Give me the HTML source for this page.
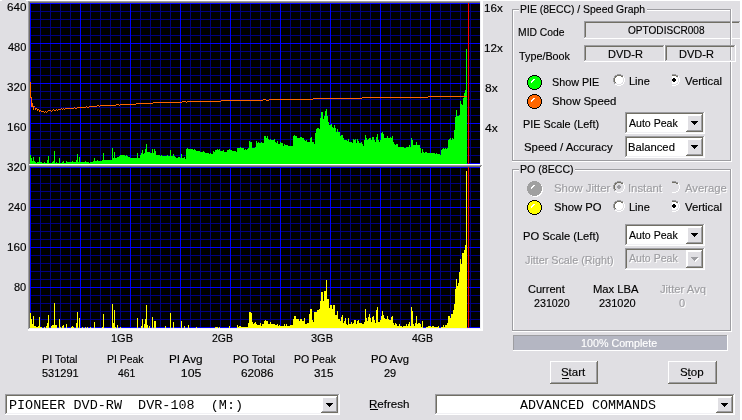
<!DOCTYPE html>
<html><head><meta charset="utf-8"><style>
html,body{margin:0;padding:0;width:742px;height:420px;overflow:hidden;background:#e0dfe3;}
svg{display:block;will-change:transform;}
text{white-space:pre;} .tx{stroke:currentColor;stroke-width:0.15px;}
</style></head><body>
<svg width="742" height="420" viewBox="0 0 742 420" shape-rendering="crispEdges">
<rect x="0" y="0" width="742" height="420" fill="#e0dfe3"/>
<rect x="26" y="0" width="716" height="1" fill="#ffffff"/>
<rect x="0" y="0" width="2" height="1" fill="#ffffff"/>
<rect x="740" y="0" width="2" height="420" fill="#ffffff"/>
<rect x="28" y="1" width="454" height="1" fill="#9d9da1"/>
<rect x="28" y="1" width="1" height="164" fill="#9d9da1"/>
<rect x="29" y="2" width="452" height="1" fill="#716f64"/>
<rect x="29" y="2" width="1" height="163" fill="#716f64"/>
<rect x="30" y="3" width="450" height="161" fill="#000"/>
<rect x="30" y="3" width="1" height="161" fill="#0000ff"/>
<rect x="40" y="3" width="1" height="161" fill="#000080"/>
<rect x="50" y="3" width="1" height="161" fill="#000080"/>
<rect x="60" y="3" width="1" height="161" fill="#000080"/>
<rect x="70" y="3" width="1" height="161" fill="#000080"/>
<rect x="80" y="3" width="1" height="161" fill="#0000ff"/>
<rect x="90" y="3" width="1" height="161" fill="#000080"/>
<rect x="100" y="3" width="1" height="161" fill="#000080"/>
<rect x="110" y="3" width="1" height="161" fill="#000080"/>
<rect x="120" y="3" width="1" height="161" fill="#000080"/>
<rect x="130" y="3" width="1" height="161" fill="#0000ff"/>
<rect x="140" y="3" width="1" height="161" fill="#000080"/>
<rect x="150" y="3" width="1" height="161" fill="#000080"/>
<rect x="160" y="3" width="1" height="161" fill="#000080"/>
<rect x="170" y="3" width="1" height="161" fill="#000080"/>
<rect x="180" y="3" width="1" height="161" fill="#0000ff"/>
<rect x="190" y="3" width="1" height="161" fill="#000080"/>
<rect x="200" y="3" width="1" height="161" fill="#000080"/>
<rect x="210" y="3" width="1" height="161" fill="#000080"/>
<rect x="220" y="3" width="1" height="161" fill="#000080"/>
<rect x="230" y="3" width="1" height="161" fill="#0000ff"/>
<rect x="240" y="3" width="1" height="161" fill="#000080"/>
<rect x="250" y="3" width="1" height="161" fill="#000080"/>
<rect x="260" y="3" width="1" height="161" fill="#000080"/>
<rect x="270" y="3" width="1" height="161" fill="#000080"/>
<rect x="280" y="3" width="1" height="161" fill="#0000ff"/>
<rect x="290" y="3" width="1" height="161" fill="#000080"/>
<rect x="300" y="3" width="1" height="161" fill="#000080"/>
<rect x="310" y="3" width="1" height="161" fill="#000080"/>
<rect x="320" y="3" width="1" height="161" fill="#000080"/>
<rect x="330" y="3" width="1" height="161" fill="#0000ff"/>
<rect x="340" y="3" width="1" height="161" fill="#000080"/>
<rect x="350" y="3" width="1" height="161" fill="#000080"/>
<rect x="360" y="3" width="1" height="161" fill="#000080"/>
<rect x="370" y="3" width="1" height="161" fill="#000080"/>
<rect x="380" y="3" width="1" height="161" fill="#0000ff"/>
<rect x="390" y="3" width="1" height="161" fill="#000080"/>
<rect x="400" y="3" width="1" height="161" fill="#000080"/>
<rect x="410" y="3" width="1" height="161" fill="#000080"/>
<rect x="420" y="3" width="1" height="161" fill="#000080"/>
<rect x="430" y="3" width="1" height="161" fill="#0000ff"/>
<rect x="440" y="3" width="1" height="161" fill="#000080"/>
<rect x="450" y="3" width="1" height="161" fill="#000080"/>
<rect x="460" y="3" width="1" height="161" fill="#000080"/>
<rect x="470" y="3" width="1" height="161" fill="#000080"/>
<rect x="30" y="3" width="450" height="1" fill="#0000ff"/>
<rect x="30" y="11" width="450" height="1" fill="#000080"/>
<rect x="30" y="19" width="450" height="1" fill="#000080"/>
<rect x="30" y="27" width="450" height="1" fill="#000080"/>
<rect x="30" y="35" width="450" height="1" fill="#000080"/>
<rect x="30" y="43" width="450" height="1" fill="#0000ff"/>
<rect x="30" y="51" width="450" height="1" fill="#000080"/>
<rect x="30" y="59" width="450" height="1" fill="#000080"/>
<rect x="30" y="67" width="450" height="1" fill="#000080"/>
<rect x="30" y="75" width="450" height="1" fill="#000080"/>
<rect x="30" y="83" width="450" height="1" fill="#0000ff"/>
<rect x="30" y="91" width="450" height="1" fill="#000080"/>
<rect x="30" y="99" width="450" height="1" fill="#000080"/>
<rect x="30" y="107" width="450" height="1" fill="#000080"/>
<rect x="30" y="115" width="450" height="1" fill="#000080"/>
<rect x="30" y="123" width="450" height="1" fill="#0000ff"/>
<rect x="30" y="131" width="450" height="1" fill="#000080"/>
<rect x="30" y="139" width="450" height="1" fill="#000080"/>
<rect x="30" y="147" width="450" height="1" fill="#000080"/>
<rect x="30" y="155" width="450" height="1" fill="#000080"/>
<rect x="30" y="163" width="450" height="1" fill="#0000ff"/>
<rect x="30" y="3" width="1" height="161" fill="#0000ff"/>
<rect x="80" y="3" width="1" height="161" fill="#0000ff"/>
<rect x="130" y="3" width="1" height="161" fill="#0000ff"/>
<rect x="180" y="3" width="1" height="161" fill="#0000ff"/>
<rect x="230" y="3" width="1" height="161" fill="#0000ff"/>
<rect x="280" y="3" width="1" height="161" fill="#0000ff"/>
<rect x="330" y="3" width="1" height="161" fill="#0000ff"/>
<rect x="380" y="3" width="1" height="161" fill="#0000ff"/>
<rect x="430" y="3" width="1" height="161" fill="#0000ff"/>
<rect x="30" y="3" width="450" height="1" fill="#0000ff"/>
<rect x="30" y="43" width="450" height="1" fill="#0000ff"/>
<rect x="30" y="83" width="450" height="1" fill="#0000ff"/>
<rect x="30" y="123" width="450" height="1" fill="#0000ff"/>
<rect x="30" y="163" width="450" height="1" fill="#0000ff"/>
<path d="M30 155H31V164H30ZM31 158H32V164H31ZM32 161H33V164H32ZM33 157H34V164H33ZM34 161H35V164H34ZM35 162H36V164H35ZM36 163H37V164H36ZM37 162H39V164H37ZM39 157H40V164H39ZM40 162H42V164H40ZM42 163H44V164H42ZM44 162H45V164H44ZM45 163H47V164H45ZM47 160H48V164H47ZM48 156H49V164H48ZM49 163H52V164H49ZM52 162H53V164H52ZM53 161H54V164H53ZM54 151H55V164H54ZM55 163H56V164H55ZM56 162H57V164H56ZM57 163H59V164H57ZM59 158H60V164H59ZM60 163H62V164H60ZM62 162H63V164H62ZM63 161H64V164H63ZM64 163H66V164H64ZM66 161H67V164H66ZM67 162H72V164H67ZM72 161H73V164H72ZM73 162H76V164H73ZM76 160H77V164H76ZM77 154H78V164H77ZM78 162H79V164H78ZM79 157H80V164H79ZM80 162H85V164H80ZM85 161H86V164H85ZM86 162H89V164H86ZM89 163H90V164H89ZM90 162H93V164H90ZM93 161H94V164H93ZM94 158H95V164H94ZM95 161H97V164H95ZM97 160H98V164H97ZM98 161H102V164H98ZM102 160H103V164H102ZM103 153H104V164H103ZM104 160H112V164H104ZM112 148H113V164H112ZM113 158H114V164H113ZM114 152H115V164H114ZM115 158H117V164H115ZM117 157H119V164H117ZM119 156H120V164H119ZM120 155H125V164H120ZM125 156H126V164H125ZM126 155H127V164H126ZM127 156H128V164H127ZM128 157H130V164H128ZM130 158H137V164H130ZM137 153H138V164H137ZM138 158H140V164H138ZM140 155H141V164H140ZM141 153H142V164H141ZM142 150H143V164H142ZM143 154H144V164H143ZM144 153H145V164H144ZM145 149H146V164H145ZM146 144H147V164H146ZM147 152H150V164H147ZM150 153H152V164H150ZM152 149H153V164H152ZM153 153H154V164H153ZM154 149H155V164H154ZM155 151H156V164H155ZM156 155H160V164H156ZM160 156H161V164H160ZM161 155H162V164H161ZM162 156H167V164H162ZM167 155H168V164H167ZM168 156H170V164H168ZM170 150H171V164H170ZM171 156H173V164H171ZM173 154H174V164H173ZM174 156H175V164H174ZM175 157H176V164H175ZM176 158H178V164H176ZM178 157H180V164H178ZM180 158H181V164H180ZM181 154H182V164H181ZM182 158H184V164H182ZM184 157H185V164H184ZM185 159H186V164H185ZM186 149H187V164H186ZM187 148H188V164H187ZM188 149H193V164H188ZM193 150H194V164H193ZM194 149H195V164H194ZM195 150H196V164H195ZM196 151H200V164H196ZM200 152H203V164H200ZM203 151H204V164H203ZM204 152H205V164H204ZM205 153H209V164H205ZM209 154H210V164H209ZM210 153H211V164H210ZM211 154H213V164H211ZM213 151H214V164H213ZM214 152H215V164H214ZM215 150H217V164H215ZM217 149H218V164H217ZM218 150H219V164H218ZM219 149H220V164H219ZM220 151H223V164H220ZM223 150H224V164H223ZM224 152H227V164H224ZM227 150H229V164H227ZM229 149H230V164H229ZM230 150H232V164H230ZM232 151H236V164H232ZM236 152H237V164H236ZM237 148H240V164H237ZM240 147H241V164H240ZM241 148H244V164H241ZM244 150H245V164H244ZM245 149H246V164H245ZM246 150H247V164H246ZM247 149H248V164H247ZM248 148H249V164H248ZM249 141H250V164H249ZM250 142H252V164H250ZM252 148H255V164H252ZM255 147H256V164H255ZM256 141H257V164H256ZM257 143H258V164H257ZM258 142H259V164H258ZM259 143H261V164H259ZM261 142H262V164H261ZM262 143H264V164H262ZM264 136H266V164H264ZM266 138H267V164H266ZM267 136H268V164H267ZM268 139H269V164H268ZM269 140H270V164H269ZM270 139H271V164H270ZM271 140H274V164H271ZM274 139H275V164H274ZM275 142H276V164H275ZM276 143H277V164H276ZM277 141H278V164H277ZM278 144H280V164H278ZM280 142H281V164H280ZM281 143H283V164H281ZM283 146H284V164H283ZM284 144H285V164H284ZM285 145H288V164H285ZM288 146H293V164H288ZM293 136H294V164H293ZM294 135H295V164H294ZM295 136H297V164H295ZM297 138H300V164H297ZM300 137H302V164H300ZM302 138H304V164H302ZM304 140H305V164H304ZM305 141H306V164H305ZM306 140H307V164H306ZM307 142H310V164H307ZM310 138H311V164H310ZM311 137H312V164H311ZM312 142H314V164H312ZM314 144H315V164H314ZM315 133H316V164H315ZM316 129H317V164H316ZM317 128H319V164H317ZM319 129H320V164H319ZM320 118H321V164H320ZM321 112H323V164H321ZM323 119H324V164H323ZM324 116H325V164H324ZM325 111H326V164H325ZM326 109H327V164H326ZM327 116H328V164H327ZM328 122H329V164H328ZM329 125H331V164H329ZM331 124H332V164H331ZM332 127H333V164H332ZM333 128H334V164H333ZM334 125H335V164H334ZM335 128H336V164H335ZM336 132H337V164H336ZM337 129H338V164H337ZM338 132H340V164H338ZM340 136H341V164H340ZM341 135H343V164H341ZM343 138H344V164H343ZM344 140H347V164H344ZM347 141H348V164H347ZM348 139H349V164H348ZM349 142H352V164H349ZM352 143H353V164H352ZM353 139H354V164H353ZM354 140H355V164H354ZM355 139H356V164H355ZM356 143H357V164H356ZM357 139H358V164H357ZM358 141H359V164H358ZM359 143H361V164H359ZM361 142H362V164H361ZM362 144H363V164H362ZM363 146H364V164H363ZM364 140H365V164H364ZM365 135H366V164H365ZM366 138H367V164H366ZM367 140H368V164H367ZM368 139H369V164H368ZM369 138H371V164H369ZM371 140H372V164H371ZM372 137H374V164H372ZM374 140H375V164H374ZM375 142H376V164H375ZM376 137H377V164H376ZM377 134H378V164H377ZM378 140H379V164H378ZM379 142H380V164H379ZM380 140H381V164H380ZM381 133H382V164H381ZM382 132H383V164H382ZM383 134H384V164H383ZM384 138H387V164H384ZM387 136H388V164H387ZM388 138H390V164H388ZM390 137H391V164H390ZM391 138H392V164H391ZM392 136H393V164H392ZM393 142H394V164H393ZM394 144H395V164H394ZM395 145H396V164H395ZM396 144H398V164H396ZM398 147H404V164H398ZM404 148H406V164H404ZM406 147H409V164H406ZM409 145H410V164H409ZM410 147H411V164H410ZM411 138H412V164H411ZM412 140H413V164H412ZM413 145H416V164H413ZM416 142H417V164H416ZM417 145H420V164H417ZM420 148H421V164H420ZM421 153H422V164H421ZM422 149H423V164H422ZM423 152H424V164H423ZM424 153H425V164H424ZM425 152H427V164H425ZM427 153H435V164H427ZM435 154H436V164H435ZM436 153H437V164H436ZM437 154H440V164H437ZM440 155H441V164H440ZM441 150H442V164H441ZM442 149H443V164H442ZM443 148H444V164H443ZM444 149H445V164H444ZM445 148H446V164H445ZM446 149H447V164H446ZM447 148H448V164H447ZM448 140H449V164H448ZM449 139H450V164H449ZM450 138H451V164H450ZM451 140H452V164H451ZM452 138H453V164H452ZM453 139H454V164H453ZM454 130H455V164H454ZM455 117H456V164H455ZM456 110H457V164H456ZM457 116H459V164H457ZM459 115H460V164H459ZM460 101H461V164H460ZM461 104H462V164H461ZM462 105H463V164H462ZM463 98H464V164H463ZM464 93H465V164H464ZM465 90H466V164H465ZM466 49H467V164H466Z" fill="#00ff00"/>
<rect x="30" y="82" width="1" height="16" fill="#ff6600"/>
<rect x="31" y="97" width="1" height="10" fill="#ff6600"/>
<rect x="32" y="103" width="1" height="4" fill="#ff6600"/>
<rect x="33" y="106" width="1" height="4" fill="#ff6600"/>
<rect x="34" y="106" width="1" height="1" fill="#ff6600"/>
<rect x="35" y="108" width="1" height="2" fill="#ff6600"/>
<rect x="36" y="108" width="1" height="1" fill="#ff6600"/>
<rect x="37" y="109" width="1" height="2" fill="#ff6600"/>
<rect x="38" y="109" width="1" height="1" fill="#ff6600"/>
<rect x="39" y="110" width="1" height="2" fill="#ff6600"/>
<rect x="40" y="110" width="1" height="1" fill="#ff6600"/>
<rect x="41" y="111" width="3" height="1" fill="#ff6600"/>
<rect x="44" y="112" width="1" height="1" fill="#ff6600"/>
<rect x="45" y="111" width="1" height="1" fill="#ff6600"/>
<rect x="46" y="112" width="1" height="1" fill="#ff6600"/>
<rect x="47" y="111" width="1" height="1" fill="#ff6600"/>
<rect x="48" y="110" width="3" height="1" fill="#ff6600"/>
<rect x="51" y="111" width="1" height="1" fill="#ff6600"/>
<rect x="52" y="110" width="1" height="1" fill="#ff6600"/>
<rect x="53" y="109" width="1" height="1" fill="#ff6600"/>
<rect x="54" y="110" width="2" height="1" fill="#ff6600"/>
<rect x="56" y="109" width="1" height="1" fill="#ff6600"/>
<rect x="57" y="110" width="1" height="1" fill="#ff6600"/>
<rect x="58" y="109" width="3" height="1" fill="#ff6600"/>
<rect x="61" y="108" width="1" height="1" fill="#ff6600"/>
<rect x="62" y="109" width="1" height="1" fill="#ff6600"/>
<rect x="63" y="108" width="1" height="1" fill="#ff6600"/>
<rect x="64" y="109" width="1" height="1" fill="#ff6600"/>
<rect x="65" y="108" width="9" height="1" fill="#ff6600"/>
<rect x="74" y="107" width="1" height="1" fill="#ff6600"/>
<rect x="75" y="108" width="2" height="1" fill="#ff6600"/>
<rect x="77" y="107" width="9" height="1" fill="#ff6600"/>
<rect x="86" y="106" width="1" height="1" fill="#ff6600"/>
<rect x="87" y="107" width="2" height="1" fill="#ff6600"/>
<rect x="89" y="106" width="8" height="1" fill="#ff6600"/>
<rect x="97" y="105" width="2" height="1" fill="#ff6600"/>
<rect x="99" y="106" width="1" height="1" fill="#ff6600"/>
<rect x="100" y="105" width="16" height="1" fill="#ff6600"/>
<rect x="116" y="104" width="3" height="1" fill="#ff6600"/>
<rect x="119" y="105" width="1" height="1" fill="#ff6600"/>
<rect x="120" y="104" width="16" height="1" fill="#ff6600"/>
<rect x="136" y="103" width="17" height="1" fill="#ff6600"/>
<rect x="153" y="102" width="29" height="1" fill="#ff6600"/>
<rect x="182" y="101" width="4" height="1" fill="#ff6600"/>
<rect x="186" y="102" width="1" height="1" fill="#ff6600"/>
<rect x="187" y="101" width="34" height="1" fill="#ff6600"/>
<rect x="221" y="100" width="42" height="1" fill="#ff6600"/>
<rect x="263" y="99" width="3" height="1" fill="#ff6600"/>
<rect x="266" y="100" width="3" height="1" fill="#ff6600"/>
<rect x="269" y="99" width="44" height="1" fill="#ff6600"/>
<rect x="313" y="98" width="49" height="1" fill="#ff6600"/>
<rect x="362" y="97" width="66" height="1" fill="#ff6600"/>
<rect x="428" y="96" width="39" height="1" fill="#ff6600"/>
<rect x="468" y="3" width="1" height="161" fill="#ff0000"/>
<rect x="29" y="164" width="454" height="1" fill="#ffffff"/>
<rect x="480" y="1" width="1" height="164" fill="#f1f1f4"/>
<rect x="481" y="0" width="1" height="165" fill="#ffffff"/>
<rect x="482" y="0" width="1" height="331" fill="#ffffff"/>
<rect x="28" y="165" width="454" height="1" fill="#9d9da1"/>
<rect x="28" y="165" width="1" height="165" fill="#9d9da1"/>
<rect x="29" y="166" width="452" height="1" fill="#716f64"/>
<rect x="29" y="166" width="1" height="163" fill="#716f64"/>
<rect x="30" y="167" width="450" height="161" fill="#000"/>
<rect x="30" y="167" width="1" height="161" fill="#0000ff"/>
<rect x="40" y="167" width="1" height="161" fill="#000080"/>
<rect x="50" y="167" width="1" height="161" fill="#000080"/>
<rect x="60" y="167" width="1" height="161" fill="#000080"/>
<rect x="70" y="167" width="1" height="161" fill="#000080"/>
<rect x="80" y="167" width="1" height="161" fill="#0000ff"/>
<rect x="90" y="167" width="1" height="161" fill="#000080"/>
<rect x="100" y="167" width="1" height="161" fill="#000080"/>
<rect x="110" y="167" width="1" height="161" fill="#000080"/>
<rect x="120" y="167" width="1" height="161" fill="#000080"/>
<rect x="130" y="167" width="1" height="161" fill="#0000ff"/>
<rect x="140" y="167" width="1" height="161" fill="#000080"/>
<rect x="150" y="167" width="1" height="161" fill="#000080"/>
<rect x="160" y="167" width="1" height="161" fill="#000080"/>
<rect x="170" y="167" width="1" height="161" fill="#000080"/>
<rect x="180" y="167" width="1" height="161" fill="#0000ff"/>
<rect x="190" y="167" width="1" height="161" fill="#000080"/>
<rect x="200" y="167" width="1" height="161" fill="#000080"/>
<rect x="210" y="167" width="1" height="161" fill="#000080"/>
<rect x="220" y="167" width="1" height="161" fill="#000080"/>
<rect x="230" y="167" width="1" height="161" fill="#0000ff"/>
<rect x="240" y="167" width="1" height="161" fill="#000080"/>
<rect x="250" y="167" width="1" height="161" fill="#000080"/>
<rect x="260" y="167" width="1" height="161" fill="#000080"/>
<rect x="270" y="167" width="1" height="161" fill="#000080"/>
<rect x="280" y="167" width="1" height="161" fill="#0000ff"/>
<rect x="290" y="167" width="1" height="161" fill="#000080"/>
<rect x="300" y="167" width="1" height="161" fill="#000080"/>
<rect x="310" y="167" width="1" height="161" fill="#000080"/>
<rect x="320" y="167" width="1" height="161" fill="#000080"/>
<rect x="330" y="167" width="1" height="161" fill="#0000ff"/>
<rect x="340" y="167" width="1" height="161" fill="#000080"/>
<rect x="350" y="167" width="1" height="161" fill="#000080"/>
<rect x="360" y="167" width="1" height="161" fill="#000080"/>
<rect x="370" y="167" width="1" height="161" fill="#000080"/>
<rect x="380" y="167" width="1" height="161" fill="#0000ff"/>
<rect x="390" y="167" width="1" height="161" fill="#000080"/>
<rect x="400" y="167" width="1" height="161" fill="#000080"/>
<rect x="410" y="167" width="1" height="161" fill="#000080"/>
<rect x="420" y="167" width="1" height="161" fill="#000080"/>
<rect x="430" y="167" width="1" height="161" fill="#0000ff"/>
<rect x="440" y="167" width="1" height="161" fill="#000080"/>
<rect x="450" y="167" width="1" height="161" fill="#000080"/>
<rect x="460" y="167" width="1" height="161" fill="#000080"/>
<rect x="470" y="167" width="1" height="161" fill="#000080"/>
<rect x="30" y="167" width="450" height="1" fill="#0000ff"/>
<rect x="30" y="175" width="450" height="1" fill="#000080"/>
<rect x="30" y="183" width="450" height="1" fill="#000080"/>
<rect x="30" y="191" width="450" height="1" fill="#000080"/>
<rect x="30" y="199" width="450" height="1" fill="#000080"/>
<rect x="30" y="207" width="450" height="1" fill="#0000ff"/>
<rect x="30" y="215" width="450" height="1" fill="#000080"/>
<rect x="30" y="223" width="450" height="1" fill="#000080"/>
<rect x="30" y="231" width="450" height="1" fill="#000080"/>
<rect x="30" y="239" width="450" height="1" fill="#000080"/>
<rect x="30" y="247" width="450" height="1" fill="#0000ff"/>
<rect x="30" y="255" width="450" height="1" fill="#000080"/>
<rect x="30" y="263" width="450" height="1" fill="#000080"/>
<rect x="30" y="271" width="450" height="1" fill="#000080"/>
<rect x="30" y="279" width="450" height="1" fill="#000080"/>
<rect x="30" y="287" width="450" height="1" fill="#0000ff"/>
<rect x="30" y="295" width="450" height="1" fill="#000080"/>
<rect x="30" y="303" width="450" height="1" fill="#000080"/>
<rect x="30" y="311" width="450" height="1" fill="#000080"/>
<rect x="30" y="319" width="450" height="1" fill="#000080"/>
<rect x="30" y="327" width="450" height="1" fill="#0000ff"/>
<rect x="30" y="167" width="1" height="161" fill="#0000ff"/>
<rect x="80" y="167" width="1" height="161" fill="#0000ff"/>
<rect x="130" y="167" width="1" height="161" fill="#0000ff"/>
<rect x="180" y="167" width="1" height="161" fill="#0000ff"/>
<rect x="230" y="167" width="1" height="161" fill="#0000ff"/>
<rect x="280" y="167" width="1" height="161" fill="#0000ff"/>
<rect x="330" y="167" width="1" height="161" fill="#0000ff"/>
<rect x="380" y="167" width="1" height="161" fill="#0000ff"/>
<rect x="430" y="167" width="1" height="161" fill="#0000ff"/>
<rect x="30" y="167" width="450" height="1" fill="#0000ff"/>
<rect x="30" y="207" width="450" height="1" fill="#0000ff"/>
<rect x="30" y="247" width="450" height="1" fill="#0000ff"/>
<rect x="30" y="287" width="450" height="1" fill="#0000ff"/>
<rect x="30" y="327" width="450" height="1" fill="#0000ff"/>
<path d="M30 313H31V328H30ZM31 319H32V328H31ZM32 324H33V328H32ZM33 316H34V328H33ZM34 326H36V328H34ZM36 327H38V328H36ZM38 326H39V328H38ZM39 317H40V328H39ZM40 327H42V328H40ZM44 327H45V328H44ZM46 326H47V328H46ZM47 323H48V328H47ZM48 315H49V328H48ZM51 326H52V328H51ZM52 325H54V328H52ZM54 303H55V328H54ZM55 325H57V328H55ZM59 319H60V328H59ZM60 327H61V328H60ZM62 326H63V328H62ZM63 325H64V328H63ZM66 324H67V328H66ZM71 327H72V328H71ZM72 326H73V328H72ZM73 327H74V328H73ZM76 323H77V328H76ZM77 312H78V328H77ZM79 318H80V328H79ZM82 327H83V328H82ZM85 327H86V328H85ZM87 327H88V328H87ZM90 327H91V328H90ZM94 322H95V328H94ZM102 327H103V328H102ZM103 314H104V328H103ZM112 304H113V328H112ZM113 323H114V328H113ZM114 310H115V328H114ZM115 327H116V328H115ZM117 325H118V328H117ZM120 327H121V328H120ZM137 318H138V328H137ZM141 326H142V328H141ZM142 319H143V328H142ZM144 324H145V328H144ZM145 319H146V328H145ZM146 305H147V328H146ZM147 325H148V328H147ZM149 326H150V328H149ZM152 317H153V328H152ZM154 321H156V328H154ZM165 326H166V328H165ZM170 313H171V328H170ZM173 322H174V328H173ZM181 321H182V328H181ZM184 326H185V328H184ZM188 325H189V328H188ZM196 327H197V328H196ZM215 327H218V328H215ZM219 327H220V328H219ZM229 326H230V328H229ZM237 325H238V328H237ZM238 327H239V328H238ZM239 326H241V328H239ZM241 327H248V328H241ZM248 323H249V328H248ZM249 312H251V328H249ZM251 313H252V328H251ZM252 322H253V328H252ZM253 324H254V328H253ZM254 323H255V328H254ZM255 322H256V328H255ZM256 324H257V328H256ZM257 325H260V328H257ZM260 323H261V328H260ZM261 326H262V328H261ZM262 324H264V328H262ZM264 321H265V328H264ZM265 320H266V328H265ZM266 321H268V328H266ZM268 324H270V328H268ZM270 322H271V328H270ZM271 324H275V328H271ZM275 325H277V328H275ZM277 324H278V328H277ZM278 326H279V328H278ZM279 325H280V328H279ZM280 326H284V328H280ZM284 324H285V328H284ZM285 326H286V328H285ZM286 324H287V328H286ZM287 326H290V328H287ZM290 325H293V328H290ZM293 319H294V328H293ZM294 316H296V328H294ZM296 319H299V328H296ZM299 321H300V328H299ZM300 319H302V328H300ZM302 321H304V328H302ZM304 318H305V328H304ZM305 324H307V328H305ZM307 323H309V328H307ZM309 314H310V328H309ZM310 309H312V328H310ZM312 320H313V328H312ZM313 322H314V328H313ZM314 312H317V328H314ZM317 310H319V328H317ZM319 309H320V328H319ZM320 301H321V328H320ZM321 292H323V328H321ZM323 301H324V328H323ZM324 291H326V328H324ZM326 280H327V328H326ZM327 299H329V328H327ZM329 308H330V328H329ZM330 305H332V328H330ZM332 309H333V328H332ZM333 305H335V328H333ZM335 315H337V328H335ZM337 311H338V328H337ZM338 319H340V328H338ZM340 321H341V328H340ZM341 317H342V328H341ZM342 315H343V328H342ZM343 323H344V328H343ZM344 321H345V328H344ZM345 318H346V328H345ZM346 324H347V328H346ZM347 325H348V328H347ZM348 318H349V328H348ZM349 324H351V328H349ZM351 322H352V328H351ZM352 324H353V328H352ZM353 323H354V328H353ZM354 320H356V328H354ZM356 324H357V328H356ZM357 321H358V328H357ZM358 320H359V328H358ZM359 323H362V328H359ZM362 324H364V328H362ZM364 322H365V328H364ZM365 309H366V328H365ZM366 318H367V328H366ZM367 321H368V328H367ZM368 317H369V328H368ZM369 314H370V328H369ZM370 318H371V328H370ZM371 322H372V328H371ZM372 317H373V328H372ZM373 316H374V328H373ZM374 320H375V328H374ZM375 323H376V328H375ZM376 310H377V328H376ZM377 307H378V328H377ZM378 322H380V328H378ZM380 320H381V328H380ZM381 316H382V328H381ZM382 311H383V328H382ZM383 315H384V328H383ZM384 318H385V328H384ZM385 319H387V328H385ZM387 316H388V328H387ZM388 319H389V328H388ZM389 320H391V328H389ZM391 317H392V328H391ZM392 316H393V328H392ZM393 323H394V328H393ZM394 325H395V328H394ZM395 323H396V328H395ZM396 324H397V328H396ZM397 326H399V328H397ZM399 324H400V328H399ZM400 326H402V328H400ZM402 327H403V328H402ZM403 326H406V328H403ZM406 324H407V328H406ZM407 326H408V328H407ZM408 324H409V328H408ZM409 322H410V328H409ZM410 326H411V328H410ZM411 307H412V328H411ZM412 311H413V328H412ZM413 324H414V328H413ZM414 326H415V328H414ZM415 323H416V328H415ZM416 316H417V328H416ZM417 324H418V328H417ZM418 323H420V328H418ZM420 324H421V328H420ZM421 327H422V328H421ZM422 321H423V328H422ZM426 327H428V328H426ZM428 326H431V328H428ZM431 327H432V328H431ZM432 326H434V328H432ZM434 327H438V328H434ZM438 326H439V328H438ZM441 327H443V328H441ZM443 325H444V328H443ZM444 327H445V328H444ZM445 325H447V328H445ZM447 323H448V328H447ZM448 316H450V328H448ZM450 318H451V328H450ZM451 314H453V328H451ZM453 310H454V328H453ZM454 304H455V328H454ZM455 289H456V328H455ZM456 279H457V328H456ZM457 286H458V328H457ZM458 283H459V328H458ZM459 272H460V328H459ZM460 259H461V328H460ZM461 264H462V328H461ZM462 253H464V328H462ZM464 250H465V328H464ZM465 245H466V328H465ZM466 171H467V328H466Z" fill="#ffff00"/>
<rect x="468" y="167" width="1" height="161" fill="#ff0000"/>
<rect x="29" y="328" width="452" height="1" fill="#f1f1f4"/>
<rect x="28" y="329" width="455" height="1" fill="#ffffff"/>
<rect x="28" y="330" width="455" height="1" fill="#ffffff"/>
<rect x="480" y="167" width="1" height="162" fill="#f1f1f4"/>
<rect x="481" y="166" width="1" height="164" fill="#ffffff"/>
<rect x="480" y="165" width="2" height="1" fill="#9d9da1"/>
<rect x="480" y="166" width="1" height="1" fill="#716f64"/>
<text class="tx" color="#000" x="6.94" y="11" font-size="11" fill="#000" text-anchor="start" font-family='"Liberation Sans", sans-serif' textLength="19.44" lengthAdjust="spacingAndGlyphs" >640</text>
<text class="tx" color="#000" x="8.00" y="51" font-size="11" fill="#000" text-anchor="start" font-family='"Liberation Sans", sans-serif' textLength="18.36" lengthAdjust="spacingAndGlyphs" >480</text>
<text class="tx" color="#000" x="6.94" y="91" font-size="11" fill="#000" text-anchor="start" font-family='"Liberation Sans", sans-serif' textLength="19.44" lengthAdjust="spacingAndGlyphs" >320</text>
<text class="tx" color="#000" x="6.94" y="131" font-size="11" fill="#000" text-anchor="start" font-family='"Liberation Sans", sans-serif' textLength="19.44" lengthAdjust="spacingAndGlyphs" >160</text>
<text class="tx" color="#000" x="6.94" y="171" font-size="11" fill="#000" text-anchor="start" font-family='"Liberation Sans", sans-serif' textLength="19.44" lengthAdjust="spacingAndGlyphs" >320</text>
<text class="tx" color="#000" x="8.00" y="211" font-size="11" fill="#000" text-anchor="start" font-family='"Liberation Sans", sans-serif' textLength="18.36" lengthAdjust="spacingAndGlyphs" >240</text>
<text class="tx" color="#000" x="6.94" y="251" font-size="11" fill="#000" text-anchor="start" font-family='"Liberation Sans", sans-serif' textLength="19.44" lengthAdjust="spacingAndGlyphs" >160</text>
<text class="tx" color="#000" x="14.00" y="291" font-size="11" fill="#000" text-anchor="start" font-family='"Liberation Sans", sans-serif' textLength="12.25" lengthAdjust="spacingAndGlyphs" >80</text>
<text class="tx" color="#000" x="483.94" y="12" font-size="11" fill="#000" text-anchor="start" font-family='"Liberation Sans", sans-serif' textLength="18.79" lengthAdjust="spacingAndGlyphs" >16x</text>
<text class="tx" color="#000" x="483.94" y="52" font-size="11" fill="#000" text-anchor="start" font-family='"Liberation Sans", sans-serif' textLength="18.79" lengthAdjust="spacingAndGlyphs" >12x</text>
<text class="tx" color="#000" x="485.00" y="92" font-size="11" fill="#000" text-anchor="start" font-family='"Liberation Sans", sans-serif' textLength="12.68" lengthAdjust="spacingAndGlyphs" >8x</text>
<text class="tx" color="#000" x="485.00" y="132" font-size="11" fill="#000" text-anchor="start" font-family='"Liberation Sans", sans-serif' textLength="12.68" lengthAdjust="spacingAndGlyphs" >4x</text>
<text class="tx" color="#000" x="111.00" y="342" font-size="11" fill="#000" text-anchor="start" font-family='"Liberation Sans", sans-serif' textLength="22.02" lengthAdjust="spacingAndGlyphs" >1GB</text>
<text class="tx" color="#000" x="212.00" y="342" font-size="11" fill="#000" text-anchor="start" font-family='"Liberation Sans", sans-serif' textLength="21.01" lengthAdjust="spacingAndGlyphs" >2GB</text>
<text class="tx" color="#000" x="311.00" y="342" font-size="11" fill="#000" text-anchor="start" font-family='"Liberation Sans", sans-serif' textLength="22.02" lengthAdjust="spacingAndGlyphs" >3GB</text>
<text class="tx" color="#000" x="412.00" y="342" font-size="11" fill="#000" text-anchor="start" font-family='"Liberation Sans", sans-serif' textLength="21.01" lengthAdjust="spacingAndGlyphs" >4GB</text>
<text class="tx" color="#000" x="42.03" y="363" font-size="11" fill="#000" text-anchor="start" font-family='"Liberation Sans", sans-serif' textLength="35.46" lengthAdjust="spacingAndGlyphs" >PI Total</text>
<text class="tx" color="#000" x="42.00" y="377" font-size="11" fill="#000" text-anchor="start" font-family='"Liberation Sans", sans-serif' textLength="36.72" lengthAdjust="spacingAndGlyphs" >531291</text>
<text class="tx" color="#000" x="107.05" y="363" font-size="11" fill="#000" text-anchor="start" font-family='"Liberation Sans", sans-serif' textLength="36.45" lengthAdjust="spacingAndGlyphs" >PI Peak</text>
<text class="tx" color="#000" x="118.00" y="377" font-size="11" fill="#000" text-anchor="start" font-family='"Liberation Sans", sans-serif' textLength="17.34" lengthAdjust="spacingAndGlyphs" >461</text>
<text class="tx" color="#000" x="168.93" y="363" font-size="11" fill="#000" text-anchor="start" font-family='"Liberation Sans", sans-serif' textLength="33.72" lengthAdjust="spacingAndGlyphs" >PI Avg</text>
<text class="tx" color="#000" x="180.88" y="377" font-size="11" fill="#000" text-anchor="start" font-family='"Liberation Sans", sans-serif' textLength="20.52" lengthAdjust="spacingAndGlyphs" >105</text>
<text class="tx" color="#000" x="233.00" y="363" font-size="11" fill="#000" text-anchor="start" font-family='"Liberation Sans", sans-serif' textLength="42.00" lengthAdjust="spacingAndGlyphs" >PO Total</text>
<text class="tx" color="#000" x="240.93" y="377" font-size="11" fill="#000" text-anchor="start" font-family='"Liberation Sans", sans-serif' textLength="32.70" lengthAdjust="spacingAndGlyphs" >62086</text>
<text class="tx" color="#000" x="294.05" y="363" font-size="11" fill="#000" text-anchor="start" font-family='"Liberation Sans", sans-serif' textLength="41.98" lengthAdjust="spacingAndGlyphs" >PO Peak</text>
<text class="tx" color="#000" x="313.94" y="377" font-size="11" fill="#000" text-anchor="start" font-family='"Liberation Sans", sans-serif' textLength="19.44" lengthAdjust="spacingAndGlyphs" >315</text>
<text class="tx" color="#000" x="370.97" y="363" font-size="11" fill="#000" text-anchor="start" font-family='"Liberation Sans", sans-serif' textLength="38.14" lengthAdjust="spacingAndGlyphs" >PO Avg</text>
<text class="tx" color="#000" x="384.00" y="377" font-size="11" fill="#000" text-anchor="start" font-family='"Liberation Sans", sans-serif' textLength="12.25" lengthAdjust="spacingAndGlyphs" >29</text>
<rect x="512" y="9" width="219" height="1" fill="#9d9da1"/>
<rect x="513" y="10" width="219" height="1" fill="#ffffff"/>
<rect x="512" y="9" width="1" height="152" fill="#9d9da1"/>
<rect x="513" y="10" width="1" height="152" fill="#ffffff"/>
<rect x="512" y="160" width="219" height="1" fill="#9d9da1"/>
<rect x="512" y="161" width="220" height="1" fill="#ffffff"/>
<rect x="730" y="9" width="1" height="152" fill="#9d9da1"/>
<rect x="731" y="9" width="1" height="153" fill="#ffffff"/>
<rect x="519" y="9" width="128" height="2" fill="#e0dfe3"/>
<text class="tx" color="#000" x="520.05" y="13" font-size="11" fill="#000" text-anchor="start" font-family='"Liberation Sans", sans-serif' textLength="125.01" lengthAdjust="spacingAndGlyphs" >PIE (8ECC) / Speed Graph</text>
<text class="tx" color="#000" x="518.06" y="36" font-size="11" fill="#000" text-anchor="start" font-family='"Liberation Sans", sans-serif' textLength="46.44" lengthAdjust="spacingAndGlyphs" >MID Code</text>
<rect x="584" y="21" width="157" height="1" fill="#9d9da1"/>
<rect x="584" y="21" width="1" height="18" fill="#9d9da1"/>
<rect x="584" y="38" width="157" height="1" fill="#ffffff"/>
<rect x="740" y="21" width="1" height="18" fill="#ffffff"/>
<rect x="585" y="22" width="155" height="1" fill="#716f64"/>
<rect x="585" y="22" width="1" height="16" fill="#716f64"/>
<rect x="585" y="37" width="155" height="1" fill="#e0dfe3"/>
<rect x="739" y="22" width="1" height="16" fill="#e0dfe3"/>
<rect x="730" y="21" width="1" height="18" fill="#9d9da1"/>
<rect x="731" y="21" width="1" height="18" fill="#ffffff"/>
<text class="tx" color="#000" x="628.00" y="34" font-size="11" fill="#000" text-anchor="start" font-family='"Liberation Sans", sans-serif' textLength="76.52" lengthAdjust="spacingAndGlyphs" >OPTODISCR008</text>
<text class="tx" color="#000" x="519.00" y="60" font-size="11" fill="#000" text-anchor="start" font-family='"Liberation Sans", sans-serif' textLength="50.98" lengthAdjust="spacingAndGlyphs" >Type/Book</text>
<rect x="584" y="45" width="81" height="1" fill="#9d9da1"/>
<rect x="584" y="45" width="1" height="17" fill="#9d9da1"/>
<rect x="584" y="61" width="81" height="1" fill="#ffffff"/>
<rect x="664" y="45" width="1" height="17" fill="#ffffff"/>
<rect x="585" y="46" width="79" height="1" fill="#716f64"/>
<rect x="585" y="46" width="1" height="15" fill="#716f64"/>
<rect x="585" y="60" width="79" height="1" fill="#e0dfe3"/>
<rect x="663" y="46" width="1" height="15" fill="#e0dfe3"/>
<rect x="665" y="45" width="71" height="1" fill="#9d9da1"/>
<rect x="665" y="45" width="1" height="17" fill="#9d9da1"/>
<rect x="665" y="61" width="71" height="1" fill="#ffffff"/>
<rect x="735" y="45" width="1" height="17" fill="#ffffff"/>
<rect x="666" y="46" width="69" height="1" fill="#716f64"/>
<rect x="666" y="46" width="1" height="15" fill="#716f64"/>
<rect x="666" y="60" width="69" height="1" fill="#e0dfe3"/>
<rect x="734" y="46" width="1" height="15" fill="#e0dfe3"/>
<text class="tx" color="#000" x="608.00" y="58" font-size="11" fill="#000" text-anchor="start" font-family='"Liberation Sans", sans-serif' textLength="34.84" lengthAdjust="spacingAndGlyphs" >DVD-R</text>
<text class="tx" color="#000" x="679.00" y="58" font-size="11" fill="#000" text-anchor="start" font-family='"Liberation Sans", sans-serif' textLength="34.84" lengthAdjust="spacingAndGlyphs" >DVD-R</text>
<rect x="532" y="76" width="5" height="1" fill="#00ff00"/>
<rect x="530" y="77" width="9" height="1" fill="#00ff00"/>
<rect x="529" y="78" width="11" height="1" fill="#00ff00"/>
<rect x="529" y="79" width="11" height="1" fill="#00ff00"/>
<rect x="528" y="80" width="13" height="1" fill="#00ff00"/>
<rect x="528" y="81" width="13" height="1" fill="#00ff00"/>
<rect x="528" y="82" width="13" height="1" fill="#00ff00"/>
<rect x="528" y="83" width="13" height="1" fill="#00ff00"/>
<rect x="528" y="84" width="13" height="1" fill="#00ff00"/>
<rect x="529" y="85" width="11" height="1" fill="#00ff00"/>
<rect x="529" y="86" width="11" height="1" fill="#00ff00"/>
<rect x="530" y="87" width="9" height="1" fill="#00ff00"/>
<rect x="532" y="88" width="5" height="1" fill="#00ff00"/>
<rect x="532" y="75" width="5" height="1" fill="#000"/>
<rect x="530" y="76" width="2" height="1" fill="#000"/>
<rect x="537" y="76" width="2" height="1" fill="#000"/>
<rect x="529" y="77" width="1" height="1" fill="#000"/>
<rect x="539" y="77" width="1" height="1" fill="#000"/>
<rect x="528" y="78" width="1" height="1" fill="#000"/>
<rect x="540" y="78" width="1" height="1" fill="#000"/>
<rect x="528" y="79" width="1" height="1" fill="#000"/>
<rect x="540" y="79" width="1" height="1" fill="#000"/>
<rect x="527" y="80" width="1" height="1" fill="#000"/>
<rect x="541" y="80" width="1" height="1" fill="#000"/>
<rect x="527" y="81" width="1" height="1" fill="#000"/>
<rect x="541" y="81" width="1" height="1" fill="#000"/>
<rect x="527" y="82" width="1" height="1" fill="#000"/>
<rect x="541" y="82" width="1" height="1" fill="#000"/>
<rect x="527" y="83" width="1" height="1" fill="#000"/>
<rect x="541" y="83" width="1" height="1" fill="#000"/>
<rect x="527" y="84" width="1" height="1" fill="#000"/>
<rect x="541" y="84" width="1" height="1" fill="#000"/>
<rect x="528" y="85" width="1" height="1" fill="#000"/>
<rect x="540" y="85" width="1" height="1" fill="#000"/>
<rect x="528" y="86" width="1" height="1" fill="#000"/>
<rect x="540" y="86" width="1" height="1" fill="#000"/>
<rect x="529" y="87" width="1" height="1" fill="#000"/>
<rect x="539" y="87" width="1" height="1" fill="#000"/>
<rect x="530" y="88" width="2" height="1" fill="#000"/>
<rect x="537" y="88" width="2" height="1" fill="#000"/>
<rect x="532" y="89" width="5" height="1" fill="#000"/>
<rect x="533" y="79" width="1" height="1" fill="#ffffff"/>
<rect x="534" y="79" width="1" height="1" fill="#ffffff"/>
<rect x="532" y="80" width="1" height="1" fill="#ffffff"/>
<rect x="533" y="80" width="1" height="1" fill="#ffffff"/>
<rect x="531" y="81" width="1" height="1" fill="#ffffff"/>
<rect x="532" y="81" width="1" height="1" fill="#ffffff"/>
<rect x="531" y="82" width="1" height="1" fill="#ffffff"/>
<text class="tx" color="#000" x="552.02" y="86" font-size="11" fill="#000" text-anchor="start" font-family='"Liberation Sans", sans-serif' textLength="47.28" lengthAdjust="spacingAndGlyphs" >Show PIE</text>
<rect x="617" y="76" width="1" height="1" fill="#ffffff"/>
<rect x="618" y="76" width="1" height="1" fill="#ffffff"/>
<rect x="619" y="76" width="1" height="1" fill="#ffffff"/>
<rect x="620" y="76" width="1" height="1" fill="#ffffff"/>
<rect x="616" y="77" width="1" height="1" fill="#ffffff"/>
<rect x="617" y="77" width="1" height="1" fill="#ffffff"/>
<rect x="618" y="77" width="1" height="1" fill="#ffffff"/>
<rect x="619" y="77" width="1" height="1" fill="#ffffff"/>
<rect x="620" y="77" width="1" height="1" fill="#ffffff"/>
<rect x="621" y="77" width="1" height="1" fill="#ffffff"/>
<rect x="615" y="78" width="1" height="1" fill="#ffffff"/>
<rect x="616" y="78" width="1" height="1" fill="#ffffff"/>
<rect x="617" y="78" width="1" height="1" fill="#ffffff"/>
<rect x="618" y="78" width="1" height="1" fill="#ffffff"/>
<rect x="619" y="78" width="1" height="1" fill="#ffffff"/>
<rect x="620" y="78" width="1" height="1" fill="#ffffff"/>
<rect x="621" y="78" width="1" height="1" fill="#ffffff"/>
<rect x="622" y="78" width="1" height="1" fill="#ffffff"/>
<rect x="615" y="79" width="1" height="1" fill="#ffffff"/>
<rect x="616" y="79" width="1" height="1" fill="#ffffff"/>
<rect x="617" y="79" width="1" height="1" fill="#ffffff"/>
<rect x="618" y="79" width="1" height="1" fill="#ffffff"/>
<rect x="619" y="79" width="1" height="1" fill="#ffffff"/>
<rect x="620" y="79" width="1" height="1" fill="#ffffff"/>
<rect x="621" y="79" width="1" height="1" fill="#ffffff"/>
<rect x="622" y="79" width="1" height="1" fill="#ffffff"/>
<rect x="615" y="80" width="1" height="1" fill="#ffffff"/>
<rect x="616" y="80" width="1" height="1" fill="#ffffff"/>
<rect x="617" y="80" width="1" height="1" fill="#ffffff"/>
<rect x="618" y="80" width="1" height="1" fill="#ffffff"/>
<rect x="619" y="80" width="1" height="1" fill="#ffffff"/>
<rect x="620" y="80" width="1" height="1" fill="#ffffff"/>
<rect x="621" y="80" width="1" height="1" fill="#ffffff"/>
<rect x="622" y="80" width="1" height="1" fill="#ffffff"/>
<rect x="615" y="81" width="1" height="1" fill="#ffffff"/>
<rect x="616" y="81" width="1" height="1" fill="#ffffff"/>
<rect x="617" y="81" width="1" height="1" fill="#ffffff"/>
<rect x="618" y="81" width="1" height="1" fill="#ffffff"/>
<rect x="619" y="81" width="1" height="1" fill="#ffffff"/>
<rect x="620" y="81" width="1" height="1" fill="#ffffff"/>
<rect x="621" y="81" width="1" height="1" fill="#ffffff"/>
<rect x="622" y="81" width="1" height="1" fill="#ffffff"/>
<rect x="616" y="82" width="1" height="1" fill="#ffffff"/>
<rect x="617" y="82" width="1" height="1" fill="#ffffff"/>
<rect x="618" y="82" width="1" height="1" fill="#ffffff"/>
<rect x="619" y="82" width="1" height="1" fill="#ffffff"/>
<rect x="620" y="82" width="1" height="1" fill="#ffffff"/>
<rect x="621" y="82" width="1" height="1" fill="#ffffff"/>
<rect x="617" y="83" width="1" height="1" fill="#ffffff"/>
<rect x="618" y="83" width="1" height="1" fill="#ffffff"/>
<rect x="619" y="83" width="1" height="1" fill="#ffffff"/>
<rect x="620" y="83" width="1" height="1" fill="#ffffff"/>
<rect x="617" y="74" width="1" height="1" fill="#9d9da1"/>
<rect x="618" y="74" width="1" height="1" fill="#9d9da1"/>
<rect x="619" y="74" width="1" height="1" fill="#9d9da1"/>
<rect x="620" y="74" width="1" height="1" fill="#9d9da1"/>
<rect x="615" y="75" width="1" height="1" fill="#9d9da1"/>
<rect x="616" y="75" width="1" height="1" fill="#9d9da1"/>
<rect x="621" y="75" width="1" height="1" fill="#9d9da1"/>
<rect x="622" y="75" width="1" height="1" fill="#9d9da1"/>
<rect x="614" y="76" width="1" height="1" fill="#9d9da1"/>
<rect x="623" y="76" width="1" height="1" fill="#ffffff"/>
<rect x="614" y="77" width="1" height="1" fill="#9d9da1"/>
<rect x="623" y="77" width="1" height="1" fill="#ffffff"/>
<rect x="613" y="78" width="1" height="1" fill="#9d9da1"/>
<rect x="624" y="78" width="1" height="1" fill="#ffffff"/>
<rect x="613" y="79" width="1" height="1" fill="#9d9da1"/>
<rect x="624" y="79" width="1" height="1" fill="#ffffff"/>
<rect x="613" y="80" width="1" height="1" fill="#9d9da1"/>
<rect x="624" y="80" width="1" height="1" fill="#ffffff"/>
<rect x="613" y="81" width="1" height="1" fill="#9d9da1"/>
<rect x="624" y="81" width="1" height="1" fill="#ffffff"/>
<rect x="614" y="82" width="1" height="1" fill="#9d9da1"/>
<rect x="623" y="82" width="1" height="1" fill="#ffffff"/>
<rect x="614" y="83" width="1" height="1" fill="#9d9da1"/>
<rect x="623" y="83" width="1" height="1" fill="#ffffff"/>
<rect x="615" y="84" width="1" height="1" fill="#ffffff"/>
<rect x="616" y="84" width="1" height="1" fill="#ffffff"/>
<rect x="621" y="84" width="1" height="1" fill="#ffffff"/>
<rect x="622" y="84" width="1" height="1" fill="#ffffff"/>
<rect x="617" y="85" width="1" height="1" fill="#ffffff"/>
<rect x="618" y="85" width="1" height="1" fill="#ffffff"/>
<rect x="619" y="85" width="1" height="1" fill="#ffffff"/>
<rect x="620" y="85" width="1" height="1" fill="#ffffff"/>
<rect x="617" y="75" width="1" height="1" fill="#716f64"/>
<rect x="618" y="75" width="1" height="1" fill="#716f64"/>
<rect x="619" y="75" width="1" height="1" fill="#716f64"/>
<rect x="620" y="75" width="1" height="1" fill="#716f64"/>
<rect x="615" y="76" width="1" height="1" fill="#716f64"/>
<rect x="616" y="76" width="1" height="1" fill="#716f64"/>
<rect x="621" y="76" width="1" height="1" fill="#716f64"/>
<rect x="622" y="76" width="1" height="1" fill="#716f64"/>
<rect x="615" y="77" width="1" height="1" fill="#716f64"/>
<rect x="622" y="77" width="1" height="1" fill="#e0dfe3"/>
<rect x="614" y="78" width="1" height="1" fill="#716f64"/>
<rect x="623" y="78" width="1" height="1" fill="#e0dfe3"/>
<rect x="614" y="79" width="1" height="1" fill="#716f64"/>
<rect x="623" y="79" width="1" height="1" fill="#e0dfe3"/>
<rect x="614" y="80" width="1" height="1" fill="#716f64"/>
<rect x="623" y="80" width="1" height="1" fill="#e0dfe3"/>
<rect x="614" y="81" width="1" height="1" fill="#716f64"/>
<rect x="623" y="81" width="1" height="1" fill="#e0dfe3"/>
<rect x="615" y="82" width="1" height="1" fill="#716f64"/>
<rect x="622" y="82" width="1" height="1" fill="#e0dfe3"/>
<rect x="615" y="83" width="1" height="1" fill="#e0dfe3"/>
<rect x="616" y="83" width="1" height="1" fill="#e0dfe3"/>
<rect x="621" y="83" width="1" height="1" fill="#e0dfe3"/>
<rect x="622" y="83" width="1" height="1" fill="#e0dfe3"/>
<rect x="617" y="84" width="1" height="1" fill="#e0dfe3"/>
<rect x="618" y="84" width="1" height="1" fill="#e0dfe3"/>
<rect x="619" y="84" width="1" height="1" fill="#e0dfe3"/>
<rect x="620" y="84" width="1" height="1" fill="#e0dfe3"/>
<text class="tx" color="#000" x="629.00" y="85" font-size="11" fill="#000" text-anchor="start" font-family='"Liberation Sans", sans-serif' textLength="20.80" lengthAdjust="spacingAndGlyphs" >Line</text>
<rect x="672" y="76" width="1" height="1" fill="#ffffff"/>
<rect x="673" y="76" width="1" height="1" fill="#ffffff"/>
<rect x="674" y="76" width="1" height="1" fill="#ffffff"/>
<rect x="675" y="76" width="1" height="1" fill="#ffffff"/>
<rect x="672" y="77" width="1" height="1" fill="#ffffff"/>
<rect x="673" y="77" width="1" height="1" fill="#ffffff"/>
<rect x="674" y="77" width="1" height="1" fill="#ffffff"/>
<rect x="675" y="77" width="1" height="1" fill="#ffffff"/>
<rect x="676" y="77" width="1" height="1" fill="#ffffff"/>
<rect x="672" y="78" width="1" height="1" fill="#ffffff"/>
<rect x="673" y="78" width="1" height="1" fill="#ffffff"/>
<rect x="674" y="78" width="1" height="1" fill="#ffffff"/>
<rect x="675" y="78" width="1" height="1" fill="#ffffff"/>
<rect x="676" y="78" width="1" height="1" fill="#ffffff"/>
<rect x="677" y="78" width="1" height="1" fill="#ffffff"/>
<rect x="672" y="79" width="1" height="1" fill="#ffffff"/>
<rect x="673" y="79" width="1" height="1" fill="#ffffff"/>
<rect x="674" y="79" width="1" height="1" fill="#ffffff"/>
<rect x="675" y="79" width="1" height="1" fill="#ffffff"/>
<rect x="676" y="79" width="1" height="1" fill="#ffffff"/>
<rect x="677" y="79" width="1" height="1" fill="#ffffff"/>
<rect x="672" y="80" width="1" height="1" fill="#ffffff"/>
<rect x="673" y="80" width="1" height="1" fill="#ffffff"/>
<rect x="674" y="80" width="1" height="1" fill="#ffffff"/>
<rect x="675" y="80" width="1" height="1" fill="#ffffff"/>
<rect x="676" y="80" width="1" height="1" fill="#ffffff"/>
<rect x="677" y="80" width="1" height="1" fill="#ffffff"/>
<rect x="672" y="81" width="1" height="1" fill="#ffffff"/>
<rect x="673" y="81" width="1" height="1" fill="#ffffff"/>
<rect x="674" y="81" width="1" height="1" fill="#ffffff"/>
<rect x="675" y="81" width="1" height="1" fill="#ffffff"/>
<rect x="676" y="81" width="1" height="1" fill="#ffffff"/>
<rect x="677" y="81" width="1" height="1" fill="#ffffff"/>
<rect x="672" y="82" width="1" height="1" fill="#ffffff"/>
<rect x="673" y="82" width="1" height="1" fill="#ffffff"/>
<rect x="674" y="82" width="1" height="1" fill="#ffffff"/>
<rect x="675" y="82" width="1" height="1" fill="#ffffff"/>
<rect x="676" y="82" width="1" height="1" fill="#ffffff"/>
<rect x="672" y="83" width="1" height="1" fill="#ffffff"/>
<rect x="673" y="83" width="1" height="1" fill="#ffffff"/>
<rect x="674" y="83" width="1" height="1" fill="#ffffff"/>
<rect x="675" y="83" width="1" height="1" fill="#ffffff"/>
<rect x="672" y="74" width="1" height="1" fill="#9d9da1"/>
<rect x="673" y="74" width="1" height="1" fill="#9d9da1"/>
<rect x="674" y="74" width="1" height="1" fill="#9d9da1"/>
<rect x="675" y="74" width="1" height="1" fill="#9d9da1"/>
<rect x="676" y="75" width="1" height="1" fill="#9d9da1"/>
<rect x="677" y="75" width="1" height="1" fill="#9d9da1"/>
<rect x="678" y="76" width="1" height="1" fill="#ffffff"/>
<rect x="678" y="77" width="1" height="1" fill="#ffffff"/>
<rect x="679" y="78" width="1" height="1" fill="#ffffff"/>
<rect x="679" y="79" width="1" height="1" fill="#ffffff"/>
<rect x="679" y="80" width="1" height="1" fill="#ffffff"/>
<rect x="679" y="81" width="1" height="1" fill="#ffffff"/>
<rect x="678" y="82" width="1" height="1" fill="#ffffff"/>
<rect x="678" y="83" width="1" height="1" fill="#ffffff"/>
<rect x="676" y="84" width="1" height="1" fill="#ffffff"/>
<rect x="677" y="84" width="1" height="1" fill="#ffffff"/>
<rect x="672" y="85" width="1" height="1" fill="#ffffff"/>
<rect x="673" y="85" width="1" height="1" fill="#ffffff"/>
<rect x="674" y="85" width="1" height="1" fill="#ffffff"/>
<rect x="675" y="85" width="1" height="1" fill="#ffffff"/>
<rect x="672" y="75" width="1" height="1" fill="#716f64"/>
<rect x="673" y="75" width="1" height="1" fill="#716f64"/>
<rect x="674" y="75" width="1" height="1" fill="#716f64"/>
<rect x="675" y="75" width="1" height="1" fill="#716f64"/>
<rect x="676" y="76" width="1" height="1" fill="#716f64"/>
<rect x="677" y="76" width="1" height="1" fill="#716f64"/>
<rect x="677" y="77" width="1" height="1" fill="#e0dfe3"/>
<rect x="678" y="78" width="1" height="1" fill="#e0dfe3"/>
<rect x="678" y="79" width="1" height="1" fill="#e0dfe3"/>
<rect x="678" y="80" width="1" height="1" fill="#e0dfe3"/>
<rect x="678" y="81" width="1" height="1" fill="#e0dfe3"/>
<rect x="677" y="82" width="1" height="1" fill="#e0dfe3"/>
<rect x="676" y="83" width="1" height="1" fill="#e0dfe3"/>
<rect x="677" y="83" width="1" height="1" fill="#e0dfe3"/>
<rect x="672" y="84" width="1" height="1" fill="#e0dfe3"/>
<rect x="673" y="84" width="1" height="1" fill="#e0dfe3"/>
<rect x="674" y="84" width="1" height="1" fill="#e0dfe3"/>
<rect x="675" y="84" width="1" height="1" fill="#e0dfe3"/>
<rect x="673" y="78" width="1" height="1" fill="#000"/>
<rect x="674" y="78" width="1" height="1" fill="#000"/>
<rect x="672" y="79" width="1" height="1" fill="#000"/>
<rect x="673" y="79" width="1" height="1" fill="#000"/>
<rect x="674" y="79" width="1" height="1" fill="#000"/>
<rect x="675" y="79" width="1" height="1" fill="#000"/>
<rect x="672" y="80" width="1" height="1" fill="#000"/>
<rect x="673" y="80" width="1" height="1" fill="#000"/>
<rect x="674" y="80" width="1" height="1" fill="#000"/>
<rect x="675" y="80" width="1" height="1" fill="#000"/>
<rect x="673" y="81" width="1" height="1" fill="#000"/>
<rect x="674" y="81" width="1" height="1" fill="#000"/>
<text class="tx" color="#000" x="685.00" y="85" font-size="11" fill="#000" text-anchor="start" font-family='"Liberation Sans", sans-serif' textLength="37.08" lengthAdjust="spacingAndGlyphs" >Vertical</text>
<rect x="532" y="95" width="5" height="1" fill="#ff6600"/>
<rect x="530" y="96" width="9" height="1" fill="#ff6600"/>
<rect x="529" y="97" width="11" height="1" fill="#ff6600"/>
<rect x="529" y="98" width="11" height="1" fill="#ff6600"/>
<rect x="528" y="99" width="13" height="1" fill="#ff6600"/>
<rect x="528" y="100" width="13" height="1" fill="#ff6600"/>
<rect x="528" y="101" width="13" height="1" fill="#ff6600"/>
<rect x="528" y="102" width="13" height="1" fill="#ff6600"/>
<rect x="528" y="103" width="13" height="1" fill="#ff6600"/>
<rect x="529" y="104" width="11" height="1" fill="#ff6600"/>
<rect x="529" y="105" width="11" height="1" fill="#ff6600"/>
<rect x="530" y="106" width="9" height="1" fill="#ff6600"/>
<rect x="532" y="107" width="5" height="1" fill="#ff6600"/>
<rect x="532" y="94" width="5" height="1" fill="#000"/>
<rect x="530" y="95" width="2" height="1" fill="#000"/>
<rect x="537" y="95" width="2" height="1" fill="#000"/>
<rect x="529" y="96" width="1" height="1" fill="#000"/>
<rect x="539" y="96" width="1" height="1" fill="#000"/>
<rect x="528" y="97" width="1" height="1" fill="#000"/>
<rect x="540" y="97" width="1" height="1" fill="#000"/>
<rect x="528" y="98" width="1" height="1" fill="#000"/>
<rect x="540" y="98" width="1" height="1" fill="#000"/>
<rect x="527" y="99" width="1" height="1" fill="#000"/>
<rect x="541" y="99" width="1" height="1" fill="#000"/>
<rect x="527" y="100" width="1" height="1" fill="#000"/>
<rect x="541" y="100" width="1" height="1" fill="#000"/>
<rect x="527" y="101" width="1" height="1" fill="#000"/>
<rect x="541" y="101" width="1" height="1" fill="#000"/>
<rect x="527" y="102" width="1" height="1" fill="#000"/>
<rect x="541" y="102" width="1" height="1" fill="#000"/>
<rect x="527" y="103" width="1" height="1" fill="#000"/>
<rect x="541" y="103" width="1" height="1" fill="#000"/>
<rect x="528" y="104" width="1" height="1" fill="#000"/>
<rect x="540" y="104" width="1" height="1" fill="#000"/>
<rect x="528" y="105" width="1" height="1" fill="#000"/>
<rect x="540" y="105" width="1" height="1" fill="#000"/>
<rect x="529" y="106" width="1" height="1" fill="#000"/>
<rect x="539" y="106" width="1" height="1" fill="#000"/>
<rect x="530" y="107" width="2" height="1" fill="#000"/>
<rect x="537" y="107" width="2" height="1" fill="#000"/>
<rect x="532" y="108" width="5" height="1" fill="#000"/>
<rect x="533" y="98" width="1" height="1" fill="#ffffff"/>
<rect x="534" y="98" width="1" height="1" fill="#ffffff"/>
<rect x="532" y="99" width="1" height="1" fill="#ffffff"/>
<rect x="533" y="99" width="1" height="1" fill="#ffffff"/>
<rect x="531" y="100" width="1" height="1" fill="#ffffff"/>
<rect x="532" y="100" width="1" height="1" fill="#ffffff"/>
<rect x="531" y="101" width="1" height="1" fill="#ffffff"/>
<text class="tx" color="#000" x="551.97" y="105" font-size="11" fill="#000" text-anchor="start" font-family='"Liberation Sans", sans-serif' textLength="64.44" lengthAdjust="spacingAndGlyphs" >Show Speed</text>
<text class="tx" color="#000" x="523.01" y="128" font-size="11" fill="#000" text-anchor="start" font-family='"Liberation Sans", sans-serif' textLength="76.02" lengthAdjust="spacingAndGlyphs" >PIE Scale (Left)</text>
<rect x="625" y="112" width="80" height="22" fill="#ffffff"/>
<rect x="625" y="112" width="80" height="1" fill="#9d9da1"/>
<rect x="625" y="112" width="1" height="22" fill="#9d9da1"/>
<rect x="625" y="133" width="80" height="1" fill="#ffffff"/>
<rect x="704" y="112" width="1" height="22" fill="#ffffff"/>
<rect x="626" y="113" width="78" height="1" fill="#716f64"/>
<rect x="626" y="113" width="1" height="20" fill="#716f64"/>
<rect x="626" y="132" width="78" height="1" fill="#f1f1f4"/>
<rect x="703" y="113" width="1" height="20" fill="#f1f1f4"/>
<rect x="686" y="114" width="17" height="18" fill="#e0dfe3"/>
<rect x="686" y="114" width="17" height="1" fill="#ffffff"/>
<rect x="686" y="114" width="1" height="18" fill="#ffffff"/>
<rect x="687" y="115" width="15" height="1" fill="#ffffff"/>
<rect x="687" y="115" width="1" height="16" fill="#ffffff"/>
<rect x="686" y="131" width="17" height="1" fill="#716f64"/>
<rect x="702" y="114" width="1" height="18" fill="#716f64"/>
<rect x="687" y="130" width="15" height="1" fill="#9d9da1"/>
<rect x="701" y="115" width="1" height="16" fill="#9d9da1"/>
<rect x="691" y="121" width="7" height="1" fill="#000"/>
<rect x="692" y="122" width="5" height="1" fill="#000"/>
<rect x="693" y="123" width="3" height="1" fill="#000"/>
<rect x="694" y="124" width="1" height="1" fill="#000"/>
<text class="tx" color="#000" x="629.00" y="127" font-size="11" fill="#000" text-anchor="start" font-family='"Liberation Sans", sans-serif' textLength="48.77" lengthAdjust="spacingAndGlyphs" >Auto Peak</text>
<text class="tx" color="#000" x="523.96" y="151" font-size="11" fill="#000" text-anchor="start" font-family='"Liberation Sans", sans-serif' textLength="88.63" lengthAdjust="spacingAndGlyphs" >Speed / Accuracy</text>
<rect x="625" y="136" width="80" height="22" fill="#ffffff"/>
<rect x="625" y="136" width="80" height="1" fill="#9d9da1"/>
<rect x="625" y="136" width="1" height="22" fill="#9d9da1"/>
<rect x="625" y="157" width="80" height="1" fill="#ffffff"/>
<rect x="704" y="136" width="1" height="22" fill="#ffffff"/>
<rect x="626" y="137" width="78" height="1" fill="#716f64"/>
<rect x="626" y="137" width="1" height="20" fill="#716f64"/>
<rect x="626" y="156" width="78" height="1" fill="#f1f1f4"/>
<rect x="703" y="137" width="1" height="20" fill="#f1f1f4"/>
<rect x="686" y="138" width="17" height="18" fill="#e0dfe3"/>
<rect x="686" y="138" width="17" height="1" fill="#ffffff"/>
<rect x="686" y="138" width="1" height="18" fill="#ffffff"/>
<rect x="687" y="139" width="15" height="1" fill="#ffffff"/>
<rect x="687" y="139" width="1" height="16" fill="#ffffff"/>
<rect x="686" y="155" width="17" height="1" fill="#716f64"/>
<rect x="702" y="138" width="1" height="18" fill="#716f64"/>
<rect x="687" y="154" width="15" height="1" fill="#9d9da1"/>
<rect x="701" y="139" width="1" height="16" fill="#9d9da1"/>
<rect x="691" y="145" width="7" height="1" fill="#000"/>
<rect x="692" y="146" width="5" height="1" fill="#000"/>
<rect x="693" y="147" width="3" height="1" fill="#000"/>
<rect x="694" y="148" width="1" height="1" fill="#000"/>
<text class="tx" color="#000" x="627.98" y="151" font-size="11" fill="#000" text-anchor="start" font-family='"Liberation Sans", sans-serif' textLength="46.92" lengthAdjust="spacingAndGlyphs" >Balanced</text>
<rect x="512" y="169" width="219" height="1" fill="#9d9da1"/>
<rect x="513" y="170" width="219" height="1" fill="#ffffff"/>
<rect x="512" y="169" width="1" height="162" fill="#9d9da1"/>
<rect x="513" y="170" width="1" height="162" fill="#ffffff"/>
<rect x="512" y="330" width="219" height="1" fill="#9d9da1"/>
<rect x="512" y="331" width="220" height="1" fill="#ffffff"/>
<rect x="730" y="169" width="1" height="162" fill="#9d9da1"/>
<rect x="731" y="169" width="1" height="163" fill="#ffffff"/>
<rect x="519" y="169" width="56" height="2" fill="#e0dfe3"/>
<text class="tx" color="#000" x="520.04" y="173" font-size="11" fill="#000" text-anchor="start" font-family='"Liberation Sans", sans-serif' textLength="53.56" lengthAdjust="spacingAndGlyphs" >PO (8ECC)</text>
<rect x="533" y="183" width="5" height="1" fill="#ffffff"/>
<rect x="531" y="184" width="9" height="1" fill="#ffffff"/>
<rect x="530" y="185" width="11" height="1" fill="#ffffff"/>
<rect x="530" y="186" width="11" height="1" fill="#ffffff"/>
<rect x="529" y="187" width="13" height="1" fill="#ffffff"/>
<rect x="529" y="188" width="13" height="1" fill="#ffffff"/>
<rect x="529" y="189" width="13" height="1" fill="#ffffff"/>
<rect x="529" y="190" width="13" height="1" fill="#ffffff"/>
<rect x="529" y="191" width="13" height="1" fill="#ffffff"/>
<rect x="530" y="192" width="11" height="1" fill="#ffffff"/>
<rect x="530" y="193" width="11" height="1" fill="#ffffff"/>
<rect x="531" y="194" width="9" height="1" fill="#ffffff"/>
<rect x="533" y="195" width="5" height="1" fill="#ffffff"/>
<rect x="533" y="182" width="5" height="1" fill="#ffffff"/>
<rect x="531" y="183" width="2" height="1" fill="#ffffff"/>
<rect x="538" y="183" width="2" height="1" fill="#ffffff"/>
<rect x="530" y="184" width="1" height="1" fill="#ffffff"/>
<rect x="540" y="184" width="1" height="1" fill="#ffffff"/>
<rect x="529" y="185" width="1" height="1" fill="#ffffff"/>
<rect x="541" y="185" width="1" height="1" fill="#ffffff"/>
<rect x="529" y="186" width="1" height="1" fill="#ffffff"/>
<rect x="541" y="186" width="1" height="1" fill="#ffffff"/>
<rect x="528" y="187" width="1" height="1" fill="#ffffff"/>
<rect x="542" y="187" width="1" height="1" fill="#ffffff"/>
<rect x="528" y="188" width="1" height="1" fill="#ffffff"/>
<rect x="542" y="188" width="1" height="1" fill="#ffffff"/>
<rect x="528" y="189" width="1" height="1" fill="#ffffff"/>
<rect x="542" y="189" width="1" height="1" fill="#ffffff"/>
<rect x="528" y="190" width="1" height="1" fill="#ffffff"/>
<rect x="542" y="190" width="1" height="1" fill="#ffffff"/>
<rect x="528" y="191" width="1" height="1" fill="#ffffff"/>
<rect x="542" y="191" width="1" height="1" fill="#ffffff"/>
<rect x="529" y="192" width="1" height="1" fill="#ffffff"/>
<rect x="541" y="192" width="1" height="1" fill="#ffffff"/>
<rect x="529" y="193" width="1" height="1" fill="#ffffff"/>
<rect x="541" y="193" width="1" height="1" fill="#ffffff"/>
<rect x="530" y="194" width="1" height="1" fill="#ffffff"/>
<rect x="540" y="194" width="1" height="1" fill="#ffffff"/>
<rect x="531" y="195" width="2" height="1" fill="#ffffff"/>
<rect x="538" y="195" width="2" height="1" fill="#ffffff"/>
<rect x="533" y="196" width="5" height="1" fill="#ffffff"/>
<rect x="532" y="182" width="5" height="1" fill="#a0a0a0"/>
<rect x="530" y="183" width="9" height="1" fill="#a0a0a0"/>
<rect x="529" y="184" width="11" height="1" fill="#a0a0a0"/>
<rect x="529" y="185" width="11" height="1" fill="#a0a0a0"/>
<rect x="528" y="186" width="13" height="1" fill="#a0a0a0"/>
<rect x="528" y="187" width="13" height="1" fill="#a0a0a0"/>
<rect x="528" y="188" width="13" height="1" fill="#a0a0a0"/>
<rect x="528" y="189" width="13" height="1" fill="#a0a0a0"/>
<rect x="528" y="190" width="13" height="1" fill="#a0a0a0"/>
<rect x="529" y="191" width="11" height="1" fill="#a0a0a0"/>
<rect x="529" y="192" width="11" height="1" fill="#a0a0a0"/>
<rect x="530" y="193" width="9" height="1" fill="#a0a0a0"/>
<rect x="532" y="194" width="5" height="1" fill="#a0a0a0"/>
<rect x="532" y="181" width="5" height="1" fill="#a0a0a0"/>
<rect x="530" y="182" width="2" height="1" fill="#a0a0a0"/>
<rect x="537" y="182" width="2" height="1" fill="#a0a0a0"/>
<rect x="529" y="183" width="1" height="1" fill="#a0a0a0"/>
<rect x="539" y="183" width="1" height="1" fill="#a0a0a0"/>
<rect x="528" y="184" width="1" height="1" fill="#a0a0a0"/>
<rect x="540" y="184" width="1" height="1" fill="#a0a0a0"/>
<rect x="528" y="185" width="1" height="1" fill="#a0a0a0"/>
<rect x="540" y="185" width="1" height="1" fill="#a0a0a0"/>
<rect x="527" y="186" width="1" height="1" fill="#a0a0a0"/>
<rect x="541" y="186" width="1" height="1" fill="#a0a0a0"/>
<rect x="527" y="187" width="1" height="1" fill="#a0a0a0"/>
<rect x="541" y="187" width="1" height="1" fill="#a0a0a0"/>
<rect x="527" y="188" width="1" height="1" fill="#a0a0a0"/>
<rect x="541" y="188" width="1" height="1" fill="#a0a0a0"/>
<rect x="527" y="189" width="1" height="1" fill="#a0a0a0"/>
<rect x="541" y="189" width="1" height="1" fill="#a0a0a0"/>
<rect x="527" y="190" width="1" height="1" fill="#a0a0a0"/>
<rect x="541" y="190" width="1" height="1" fill="#a0a0a0"/>
<rect x="528" y="191" width="1" height="1" fill="#a0a0a0"/>
<rect x="540" y="191" width="1" height="1" fill="#a0a0a0"/>
<rect x="528" y="192" width="1" height="1" fill="#a0a0a0"/>
<rect x="540" y="192" width="1" height="1" fill="#a0a0a0"/>
<rect x="529" y="193" width="1" height="1" fill="#a0a0a0"/>
<rect x="539" y="193" width="1" height="1" fill="#a0a0a0"/>
<rect x="530" y="194" width="2" height="1" fill="#a0a0a0"/>
<rect x="537" y="194" width="2" height="1" fill="#a0a0a0"/>
<rect x="532" y="195" width="5" height="1" fill="#a0a0a0"/>
<rect x="533" y="185" width="1" height="1" fill="#ffffff"/>
<rect x="534" y="185" width="1" height="1" fill="#ffffff"/>
<rect x="532" y="186" width="1" height="1" fill="#ffffff"/>
<rect x="533" y="186" width="1" height="1" fill="#ffffff"/>
<rect x="531" y="187" width="1" height="1" fill="#ffffff"/>
<rect x="532" y="187" width="1" height="1" fill="#ffffff"/>
<rect x="531" y="188" width="1" height="1" fill="#ffffff"/>
<text class="tx" color="#ffffff" x="554.96" y="193" font-size="11" fill="#ffffff" text-anchor="start" font-family='"Liberation Sans", sans-serif' textLength="56.48" lengthAdjust="spacingAndGlyphs" >Show Jitter</text>
<text class="tx" color="#9d9da1" x="553.96" y="192" font-size="11" fill="#9d9da1" text-anchor="start" font-family='"Liberation Sans", sans-serif' textLength="56.48" lengthAdjust="spacingAndGlyphs" >Show Jitter</text>
<rect x="617" y="183" width="1" height="1" fill="#e0dfe3"/>
<rect x="618" y="183" width="1" height="1" fill="#e0dfe3"/>
<rect x="619" y="183" width="1" height="1" fill="#e0dfe3"/>
<rect x="620" y="183" width="1" height="1" fill="#e0dfe3"/>
<rect x="616" y="184" width="1" height="1" fill="#e0dfe3"/>
<rect x="617" y="184" width="1" height="1" fill="#e0dfe3"/>
<rect x="618" y="184" width="1" height="1" fill="#e0dfe3"/>
<rect x="619" y="184" width="1" height="1" fill="#e0dfe3"/>
<rect x="620" y="184" width="1" height="1" fill="#e0dfe3"/>
<rect x="621" y="184" width="1" height="1" fill="#e0dfe3"/>
<rect x="615" y="185" width="1" height="1" fill="#e0dfe3"/>
<rect x="616" y="185" width="1" height="1" fill="#e0dfe3"/>
<rect x="617" y="185" width="1" height="1" fill="#e0dfe3"/>
<rect x="618" y="185" width="1" height="1" fill="#e0dfe3"/>
<rect x="619" y="185" width="1" height="1" fill="#e0dfe3"/>
<rect x="620" y="185" width="1" height="1" fill="#e0dfe3"/>
<rect x="621" y="185" width="1" height="1" fill="#e0dfe3"/>
<rect x="622" y="185" width="1" height="1" fill="#e0dfe3"/>
<rect x="615" y="186" width="1" height="1" fill="#e0dfe3"/>
<rect x="616" y="186" width="1" height="1" fill="#e0dfe3"/>
<rect x="617" y="186" width="1" height="1" fill="#e0dfe3"/>
<rect x="618" y="186" width="1" height="1" fill="#e0dfe3"/>
<rect x="619" y="186" width="1" height="1" fill="#e0dfe3"/>
<rect x="620" y="186" width="1" height="1" fill="#e0dfe3"/>
<rect x="621" y="186" width="1" height="1" fill="#e0dfe3"/>
<rect x="622" y="186" width="1" height="1" fill="#e0dfe3"/>
<rect x="615" y="187" width="1" height="1" fill="#e0dfe3"/>
<rect x="616" y="187" width="1" height="1" fill="#e0dfe3"/>
<rect x="617" y="187" width="1" height="1" fill="#e0dfe3"/>
<rect x="618" y="187" width="1" height="1" fill="#e0dfe3"/>
<rect x="619" y="187" width="1" height="1" fill="#e0dfe3"/>
<rect x="620" y="187" width="1" height="1" fill="#e0dfe3"/>
<rect x="621" y="187" width="1" height="1" fill="#e0dfe3"/>
<rect x="622" y="187" width="1" height="1" fill="#e0dfe3"/>
<rect x="615" y="188" width="1" height="1" fill="#e0dfe3"/>
<rect x="616" y="188" width="1" height="1" fill="#e0dfe3"/>
<rect x="617" y="188" width="1" height="1" fill="#e0dfe3"/>
<rect x="618" y="188" width="1" height="1" fill="#e0dfe3"/>
<rect x="619" y="188" width="1" height="1" fill="#e0dfe3"/>
<rect x="620" y="188" width="1" height="1" fill="#e0dfe3"/>
<rect x="621" y="188" width="1" height="1" fill="#e0dfe3"/>
<rect x="622" y="188" width="1" height="1" fill="#e0dfe3"/>
<rect x="616" y="189" width="1" height="1" fill="#e0dfe3"/>
<rect x="617" y="189" width="1" height="1" fill="#e0dfe3"/>
<rect x="618" y="189" width="1" height="1" fill="#e0dfe3"/>
<rect x="619" y="189" width="1" height="1" fill="#e0dfe3"/>
<rect x="620" y="189" width="1" height="1" fill="#e0dfe3"/>
<rect x="621" y="189" width="1" height="1" fill="#e0dfe3"/>
<rect x="617" y="190" width="1" height="1" fill="#e0dfe3"/>
<rect x="618" y="190" width="1" height="1" fill="#e0dfe3"/>
<rect x="619" y="190" width="1" height="1" fill="#e0dfe3"/>
<rect x="620" y="190" width="1" height="1" fill="#e0dfe3"/>
<rect x="617" y="181" width="1" height="1" fill="#9d9da1"/>
<rect x="618" y="181" width="1" height="1" fill="#9d9da1"/>
<rect x="619" y="181" width="1" height="1" fill="#9d9da1"/>
<rect x="620" y="181" width="1" height="1" fill="#9d9da1"/>
<rect x="615" y="182" width="1" height="1" fill="#9d9da1"/>
<rect x="616" y="182" width="1" height="1" fill="#9d9da1"/>
<rect x="621" y="182" width="1" height="1" fill="#9d9da1"/>
<rect x="622" y="182" width="1" height="1" fill="#9d9da1"/>
<rect x="614" y="183" width="1" height="1" fill="#9d9da1"/>
<rect x="623" y="183" width="1" height="1" fill="#ffffff"/>
<rect x="614" y="184" width="1" height="1" fill="#9d9da1"/>
<rect x="623" y="184" width="1" height="1" fill="#ffffff"/>
<rect x="613" y="185" width="1" height="1" fill="#9d9da1"/>
<rect x="624" y="185" width="1" height="1" fill="#ffffff"/>
<rect x="613" y="186" width="1" height="1" fill="#9d9da1"/>
<rect x="624" y="186" width="1" height="1" fill="#ffffff"/>
<rect x="613" y="187" width="1" height="1" fill="#9d9da1"/>
<rect x="624" y="187" width="1" height="1" fill="#ffffff"/>
<rect x="613" y="188" width="1" height="1" fill="#9d9da1"/>
<rect x="624" y="188" width="1" height="1" fill="#ffffff"/>
<rect x="614" y="189" width="1" height="1" fill="#9d9da1"/>
<rect x="623" y="189" width="1" height="1" fill="#ffffff"/>
<rect x="614" y="190" width="1" height="1" fill="#9d9da1"/>
<rect x="623" y="190" width="1" height="1" fill="#ffffff"/>
<rect x="615" y="191" width="1" height="1" fill="#ffffff"/>
<rect x="616" y="191" width="1" height="1" fill="#ffffff"/>
<rect x="621" y="191" width="1" height="1" fill="#ffffff"/>
<rect x="622" y="191" width="1" height="1" fill="#ffffff"/>
<rect x="617" y="192" width="1" height="1" fill="#ffffff"/>
<rect x="618" y="192" width="1" height="1" fill="#ffffff"/>
<rect x="619" y="192" width="1" height="1" fill="#ffffff"/>
<rect x="620" y="192" width="1" height="1" fill="#ffffff"/>
<rect x="617" y="182" width="1" height="1" fill="#716f64"/>
<rect x="618" y="182" width="1" height="1" fill="#716f64"/>
<rect x="619" y="182" width="1" height="1" fill="#716f64"/>
<rect x="620" y="182" width="1" height="1" fill="#716f64"/>
<rect x="615" y="183" width="1" height="1" fill="#716f64"/>
<rect x="616" y="183" width="1" height="1" fill="#716f64"/>
<rect x="621" y="183" width="1" height="1" fill="#716f64"/>
<rect x="622" y="183" width="1" height="1" fill="#716f64"/>
<rect x="615" y="184" width="1" height="1" fill="#716f64"/>
<rect x="622" y="184" width="1" height="1" fill="#e0dfe3"/>
<rect x="614" y="185" width="1" height="1" fill="#716f64"/>
<rect x="623" y="185" width="1" height="1" fill="#e0dfe3"/>
<rect x="614" y="186" width="1" height="1" fill="#716f64"/>
<rect x="623" y="186" width="1" height="1" fill="#e0dfe3"/>
<rect x="614" y="187" width="1" height="1" fill="#716f64"/>
<rect x="623" y="187" width="1" height="1" fill="#e0dfe3"/>
<rect x="614" y="188" width="1" height="1" fill="#716f64"/>
<rect x="623" y="188" width="1" height="1" fill="#e0dfe3"/>
<rect x="615" y="189" width="1" height="1" fill="#716f64"/>
<rect x="622" y="189" width="1" height="1" fill="#e0dfe3"/>
<rect x="615" y="190" width="1" height="1" fill="#e0dfe3"/>
<rect x="616" y="190" width="1" height="1" fill="#e0dfe3"/>
<rect x="621" y="190" width="1" height="1" fill="#e0dfe3"/>
<rect x="622" y="190" width="1" height="1" fill="#e0dfe3"/>
<rect x="617" y="191" width="1" height="1" fill="#e0dfe3"/>
<rect x="618" y="191" width="1" height="1" fill="#e0dfe3"/>
<rect x="619" y="191" width="1" height="1" fill="#e0dfe3"/>
<rect x="620" y="191" width="1" height="1" fill="#e0dfe3"/>
<rect x="618" y="185" width="1" height="1" fill="#9d9da1"/>
<rect x="619" y="185" width="1" height="1" fill="#9d9da1"/>
<rect x="617" y="186" width="1" height="1" fill="#9d9da1"/>
<rect x="618" y="186" width="1" height="1" fill="#9d9da1"/>
<rect x="619" y="186" width="1" height="1" fill="#9d9da1"/>
<rect x="620" y="186" width="1" height="1" fill="#9d9da1"/>
<rect x="617" y="187" width="1" height="1" fill="#9d9da1"/>
<rect x="618" y="187" width="1" height="1" fill="#9d9da1"/>
<rect x="619" y="187" width="1" height="1" fill="#9d9da1"/>
<rect x="620" y="187" width="1" height="1" fill="#9d9da1"/>
<rect x="618" y="188" width="1" height="1" fill="#9d9da1"/>
<rect x="619" y="188" width="1" height="1" fill="#9d9da1"/>
<text class="tx" color="#ffffff" x="628.97" y="193" font-size="11" fill="#ffffff" text-anchor="start" font-family='"Liberation Sans", sans-serif' textLength="34.06" lengthAdjust="spacingAndGlyphs" >Instant</text>
<text class="tx" color="#9d9da1" x="627.97" y="192" font-size="11" fill="#9d9da1" text-anchor="start" font-family='"Liberation Sans", sans-serif' textLength="34.06" lengthAdjust="spacingAndGlyphs" >Instant</text>
<rect x="672" y="183" width="1" height="1" fill="#e0dfe3"/>
<rect x="673" y="183" width="1" height="1" fill="#e0dfe3"/>
<rect x="674" y="183" width="1" height="1" fill="#e0dfe3"/>
<rect x="675" y="183" width="1" height="1" fill="#e0dfe3"/>
<rect x="672" y="184" width="1" height="1" fill="#e0dfe3"/>
<rect x="673" y="184" width="1" height="1" fill="#e0dfe3"/>
<rect x="674" y="184" width="1" height="1" fill="#e0dfe3"/>
<rect x="675" y="184" width="1" height="1" fill="#e0dfe3"/>
<rect x="676" y="184" width="1" height="1" fill="#e0dfe3"/>
<rect x="672" y="185" width="1" height="1" fill="#e0dfe3"/>
<rect x="673" y="185" width="1" height="1" fill="#e0dfe3"/>
<rect x="674" y="185" width="1" height="1" fill="#e0dfe3"/>
<rect x="675" y="185" width="1" height="1" fill="#e0dfe3"/>
<rect x="676" y="185" width="1" height="1" fill="#e0dfe3"/>
<rect x="677" y="185" width="1" height="1" fill="#e0dfe3"/>
<rect x="672" y="186" width="1" height="1" fill="#e0dfe3"/>
<rect x="673" y="186" width="1" height="1" fill="#e0dfe3"/>
<rect x="674" y="186" width="1" height="1" fill="#e0dfe3"/>
<rect x="675" y="186" width="1" height="1" fill="#e0dfe3"/>
<rect x="676" y="186" width="1" height="1" fill="#e0dfe3"/>
<rect x="677" y="186" width="1" height="1" fill="#e0dfe3"/>
<rect x="672" y="187" width="1" height="1" fill="#e0dfe3"/>
<rect x="673" y="187" width="1" height="1" fill="#e0dfe3"/>
<rect x="674" y="187" width="1" height="1" fill="#e0dfe3"/>
<rect x="675" y="187" width="1" height="1" fill="#e0dfe3"/>
<rect x="676" y="187" width="1" height="1" fill="#e0dfe3"/>
<rect x="677" y="187" width="1" height="1" fill="#e0dfe3"/>
<rect x="672" y="188" width="1" height="1" fill="#e0dfe3"/>
<rect x="673" y="188" width="1" height="1" fill="#e0dfe3"/>
<rect x="674" y="188" width="1" height="1" fill="#e0dfe3"/>
<rect x="675" y="188" width="1" height="1" fill="#e0dfe3"/>
<rect x="676" y="188" width="1" height="1" fill="#e0dfe3"/>
<rect x="677" y="188" width="1" height="1" fill="#e0dfe3"/>
<rect x="672" y="189" width="1" height="1" fill="#e0dfe3"/>
<rect x="673" y="189" width="1" height="1" fill="#e0dfe3"/>
<rect x="674" y="189" width="1" height="1" fill="#e0dfe3"/>
<rect x="675" y="189" width="1" height="1" fill="#e0dfe3"/>
<rect x="676" y="189" width="1" height="1" fill="#e0dfe3"/>
<rect x="672" y="190" width="1" height="1" fill="#e0dfe3"/>
<rect x="673" y="190" width="1" height="1" fill="#e0dfe3"/>
<rect x="674" y="190" width="1" height="1" fill="#e0dfe3"/>
<rect x="675" y="190" width="1" height="1" fill="#e0dfe3"/>
<rect x="672" y="181" width="1" height="1" fill="#9d9da1"/>
<rect x="673" y="181" width="1" height="1" fill="#9d9da1"/>
<rect x="674" y="181" width="1" height="1" fill="#9d9da1"/>
<rect x="675" y="181" width="1" height="1" fill="#9d9da1"/>
<rect x="676" y="182" width="1" height="1" fill="#9d9da1"/>
<rect x="677" y="182" width="1" height="1" fill="#9d9da1"/>
<rect x="678" y="183" width="1" height="1" fill="#ffffff"/>
<rect x="678" y="184" width="1" height="1" fill="#ffffff"/>
<rect x="679" y="185" width="1" height="1" fill="#ffffff"/>
<rect x="679" y="186" width="1" height="1" fill="#ffffff"/>
<rect x="679" y="187" width="1" height="1" fill="#ffffff"/>
<rect x="679" y="188" width="1" height="1" fill="#ffffff"/>
<rect x="678" y="189" width="1" height="1" fill="#ffffff"/>
<rect x="678" y="190" width="1" height="1" fill="#ffffff"/>
<rect x="676" y="191" width="1" height="1" fill="#ffffff"/>
<rect x="677" y="191" width="1" height="1" fill="#ffffff"/>
<rect x="672" y="192" width="1" height="1" fill="#ffffff"/>
<rect x="673" y="192" width="1" height="1" fill="#ffffff"/>
<rect x="674" y="192" width="1" height="1" fill="#ffffff"/>
<rect x="675" y="192" width="1" height="1" fill="#ffffff"/>
<rect x="672" y="182" width="1" height="1" fill="#716f64"/>
<rect x="673" y="182" width="1" height="1" fill="#716f64"/>
<rect x="674" y="182" width="1" height="1" fill="#716f64"/>
<rect x="675" y="182" width="1" height="1" fill="#716f64"/>
<rect x="676" y="183" width="1" height="1" fill="#716f64"/>
<rect x="677" y="183" width="1" height="1" fill="#716f64"/>
<rect x="677" y="184" width="1" height="1" fill="#e0dfe3"/>
<rect x="678" y="185" width="1" height="1" fill="#e0dfe3"/>
<rect x="678" y="186" width="1" height="1" fill="#e0dfe3"/>
<rect x="678" y="187" width="1" height="1" fill="#e0dfe3"/>
<rect x="678" y="188" width="1" height="1" fill="#e0dfe3"/>
<rect x="677" y="189" width="1" height="1" fill="#e0dfe3"/>
<rect x="676" y="190" width="1" height="1" fill="#e0dfe3"/>
<rect x="677" y="190" width="1" height="1" fill="#e0dfe3"/>
<rect x="672" y="191" width="1" height="1" fill="#e0dfe3"/>
<rect x="673" y="191" width="1" height="1" fill="#e0dfe3"/>
<rect x="674" y="191" width="1" height="1" fill="#e0dfe3"/>
<rect x="675" y="191" width="1" height="1" fill="#e0dfe3"/>
<text class="tx" color="#ffffff" x="686.00" y="193" font-size="11" fill="#ffffff" text-anchor="start" font-family='"Liberation Sans", sans-serif' textLength="41.78" lengthAdjust="spacingAndGlyphs" >Average</text>
<text class="tx" color="#9d9da1" x="685.00" y="192" font-size="11" fill="#9d9da1" text-anchor="start" font-family='"Liberation Sans", sans-serif' textLength="41.78" lengthAdjust="spacingAndGlyphs" >Average</text>
<rect x="532" y="201" width="5" height="1" fill="#ffff00"/>
<rect x="530" y="202" width="9" height="1" fill="#ffff00"/>
<rect x="529" y="203" width="11" height="1" fill="#ffff00"/>
<rect x="529" y="204" width="11" height="1" fill="#ffff00"/>
<rect x="528" y="205" width="13" height="1" fill="#ffff00"/>
<rect x="528" y="206" width="13" height="1" fill="#ffff00"/>
<rect x="528" y="207" width="13" height="1" fill="#ffff00"/>
<rect x="528" y="208" width="13" height="1" fill="#ffff00"/>
<rect x="528" y="209" width="13" height="1" fill="#ffff00"/>
<rect x="529" y="210" width="11" height="1" fill="#ffff00"/>
<rect x="529" y="211" width="11" height="1" fill="#ffff00"/>
<rect x="530" y="212" width="9" height="1" fill="#ffff00"/>
<rect x="532" y="213" width="5" height="1" fill="#ffff00"/>
<rect x="532" y="200" width="5" height="1" fill="#000"/>
<rect x="530" y="201" width="2" height="1" fill="#000"/>
<rect x="537" y="201" width="2" height="1" fill="#000"/>
<rect x="529" y="202" width="1" height="1" fill="#000"/>
<rect x="539" y="202" width="1" height="1" fill="#000"/>
<rect x="528" y="203" width="1" height="1" fill="#000"/>
<rect x="540" y="203" width="1" height="1" fill="#000"/>
<rect x="528" y="204" width="1" height="1" fill="#000"/>
<rect x="540" y="204" width="1" height="1" fill="#000"/>
<rect x="527" y="205" width="1" height="1" fill="#000"/>
<rect x="541" y="205" width="1" height="1" fill="#000"/>
<rect x="527" y="206" width="1" height="1" fill="#000"/>
<rect x="541" y="206" width="1" height="1" fill="#000"/>
<rect x="527" y="207" width="1" height="1" fill="#000"/>
<rect x="541" y="207" width="1" height="1" fill="#000"/>
<rect x="527" y="208" width="1" height="1" fill="#000"/>
<rect x="541" y="208" width="1" height="1" fill="#000"/>
<rect x="527" y="209" width="1" height="1" fill="#000"/>
<rect x="541" y="209" width="1" height="1" fill="#000"/>
<rect x="528" y="210" width="1" height="1" fill="#000"/>
<rect x="540" y="210" width="1" height="1" fill="#000"/>
<rect x="528" y="211" width="1" height="1" fill="#000"/>
<rect x="540" y="211" width="1" height="1" fill="#000"/>
<rect x="529" y="212" width="1" height="1" fill="#000"/>
<rect x="539" y="212" width="1" height="1" fill="#000"/>
<rect x="530" y="213" width="2" height="1" fill="#000"/>
<rect x="537" y="213" width="2" height="1" fill="#000"/>
<rect x="532" y="214" width="5" height="1" fill="#000"/>
<rect x="533" y="204" width="1" height="1" fill="#ffffff"/>
<rect x="534" y="204" width="1" height="1" fill="#ffffff"/>
<rect x="532" y="205" width="1" height="1" fill="#ffffff"/>
<rect x="533" y="205" width="1" height="1" fill="#ffffff"/>
<rect x="531" y="206" width="1" height="1" fill="#ffffff"/>
<rect x="532" y="206" width="1" height="1" fill="#ffffff"/>
<rect x="531" y="207" width="1" height="1" fill="#ffffff"/>
<text class="tx" color="#000" x="553.98" y="211" font-size="11" fill="#000" text-anchor="start" font-family='"Liberation Sans", sans-serif' textLength="47.50" lengthAdjust="spacingAndGlyphs" >Show PO</text>
<rect x="617" y="202" width="1" height="1" fill="#ffffff"/>
<rect x="618" y="202" width="1" height="1" fill="#ffffff"/>
<rect x="619" y="202" width="1" height="1" fill="#ffffff"/>
<rect x="620" y="202" width="1" height="1" fill="#ffffff"/>
<rect x="616" y="203" width="1" height="1" fill="#ffffff"/>
<rect x="617" y="203" width="1" height="1" fill="#ffffff"/>
<rect x="618" y="203" width="1" height="1" fill="#ffffff"/>
<rect x="619" y="203" width="1" height="1" fill="#ffffff"/>
<rect x="620" y="203" width="1" height="1" fill="#ffffff"/>
<rect x="621" y="203" width="1" height="1" fill="#ffffff"/>
<rect x="615" y="204" width="1" height="1" fill="#ffffff"/>
<rect x="616" y="204" width="1" height="1" fill="#ffffff"/>
<rect x="617" y="204" width="1" height="1" fill="#ffffff"/>
<rect x="618" y="204" width="1" height="1" fill="#ffffff"/>
<rect x="619" y="204" width="1" height="1" fill="#ffffff"/>
<rect x="620" y="204" width="1" height="1" fill="#ffffff"/>
<rect x="621" y="204" width="1" height="1" fill="#ffffff"/>
<rect x="622" y="204" width="1" height="1" fill="#ffffff"/>
<rect x="615" y="205" width="1" height="1" fill="#ffffff"/>
<rect x="616" y="205" width="1" height="1" fill="#ffffff"/>
<rect x="617" y="205" width="1" height="1" fill="#ffffff"/>
<rect x="618" y="205" width="1" height="1" fill="#ffffff"/>
<rect x="619" y="205" width="1" height="1" fill="#ffffff"/>
<rect x="620" y="205" width="1" height="1" fill="#ffffff"/>
<rect x="621" y="205" width="1" height="1" fill="#ffffff"/>
<rect x="622" y="205" width="1" height="1" fill="#ffffff"/>
<rect x="615" y="206" width="1" height="1" fill="#ffffff"/>
<rect x="616" y="206" width="1" height="1" fill="#ffffff"/>
<rect x="617" y="206" width="1" height="1" fill="#ffffff"/>
<rect x="618" y="206" width="1" height="1" fill="#ffffff"/>
<rect x="619" y="206" width="1" height="1" fill="#ffffff"/>
<rect x="620" y="206" width="1" height="1" fill="#ffffff"/>
<rect x="621" y="206" width="1" height="1" fill="#ffffff"/>
<rect x="622" y="206" width="1" height="1" fill="#ffffff"/>
<rect x="615" y="207" width="1" height="1" fill="#ffffff"/>
<rect x="616" y="207" width="1" height="1" fill="#ffffff"/>
<rect x="617" y="207" width="1" height="1" fill="#ffffff"/>
<rect x="618" y="207" width="1" height="1" fill="#ffffff"/>
<rect x="619" y="207" width="1" height="1" fill="#ffffff"/>
<rect x="620" y="207" width="1" height="1" fill="#ffffff"/>
<rect x="621" y="207" width="1" height="1" fill="#ffffff"/>
<rect x="622" y="207" width="1" height="1" fill="#ffffff"/>
<rect x="616" y="208" width="1" height="1" fill="#ffffff"/>
<rect x="617" y="208" width="1" height="1" fill="#ffffff"/>
<rect x="618" y="208" width="1" height="1" fill="#ffffff"/>
<rect x="619" y="208" width="1" height="1" fill="#ffffff"/>
<rect x="620" y="208" width="1" height="1" fill="#ffffff"/>
<rect x="621" y="208" width="1" height="1" fill="#ffffff"/>
<rect x="617" y="209" width="1" height="1" fill="#ffffff"/>
<rect x="618" y="209" width="1" height="1" fill="#ffffff"/>
<rect x="619" y="209" width="1" height="1" fill="#ffffff"/>
<rect x="620" y="209" width="1" height="1" fill="#ffffff"/>
<rect x="617" y="200" width="1" height="1" fill="#9d9da1"/>
<rect x="618" y="200" width="1" height="1" fill="#9d9da1"/>
<rect x="619" y="200" width="1" height="1" fill="#9d9da1"/>
<rect x="620" y="200" width="1" height="1" fill="#9d9da1"/>
<rect x="615" y="201" width="1" height="1" fill="#9d9da1"/>
<rect x="616" y="201" width="1" height="1" fill="#9d9da1"/>
<rect x="621" y="201" width="1" height="1" fill="#9d9da1"/>
<rect x="622" y="201" width="1" height="1" fill="#9d9da1"/>
<rect x="614" y="202" width="1" height="1" fill="#9d9da1"/>
<rect x="623" y="202" width="1" height="1" fill="#ffffff"/>
<rect x="614" y="203" width="1" height="1" fill="#9d9da1"/>
<rect x="623" y="203" width="1" height="1" fill="#ffffff"/>
<rect x="613" y="204" width="1" height="1" fill="#9d9da1"/>
<rect x="624" y="204" width="1" height="1" fill="#ffffff"/>
<rect x="613" y="205" width="1" height="1" fill="#9d9da1"/>
<rect x="624" y="205" width="1" height="1" fill="#ffffff"/>
<rect x="613" y="206" width="1" height="1" fill="#9d9da1"/>
<rect x="624" y="206" width="1" height="1" fill="#ffffff"/>
<rect x="613" y="207" width="1" height="1" fill="#9d9da1"/>
<rect x="624" y="207" width="1" height="1" fill="#ffffff"/>
<rect x="614" y="208" width="1" height="1" fill="#9d9da1"/>
<rect x="623" y="208" width="1" height="1" fill="#ffffff"/>
<rect x="614" y="209" width="1" height="1" fill="#9d9da1"/>
<rect x="623" y="209" width="1" height="1" fill="#ffffff"/>
<rect x="615" y="210" width="1" height="1" fill="#ffffff"/>
<rect x="616" y="210" width="1" height="1" fill="#ffffff"/>
<rect x="621" y="210" width="1" height="1" fill="#ffffff"/>
<rect x="622" y="210" width="1" height="1" fill="#ffffff"/>
<rect x="617" y="211" width="1" height="1" fill="#ffffff"/>
<rect x="618" y="211" width="1" height="1" fill="#ffffff"/>
<rect x="619" y="211" width="1" height="1" fill="#ffffff"/>
<rect x="620" y="211" width="1" height="1" fill="#ffffff"/>
<rect x="617" y="201" width="1" height="1" fill="#716f64"/>
<rect x="618" y="201" width="1" height="1" fill="#716f64"/>
<rect x="619" y="201" width="1" height="1" fill="#716f64"/>
<rect x="620" y="201" width="1" height="1" fill="#716f64"/>
<rect x="615" y="202" width="1" height="1" fill="#716f64"/>
<rect x="616" y="202" width="1" height="1" fill="#716f64"/>
<rect x="621" y="202" width="1" height="1" fill="#716f64"/>
<rect x="622" y="202" width="1" height="1" fill="#716f64"/>
<rect x="615" y="203" width="1" height="1" fill="#716f64"/>
<rect x="622" y="203" width="1" height="1" fill="#e0dfe3"/>
<rect x="614" y="204" width="1" height="1" fill="#716f64"/>
<rect x="623" y="204" width="1" height="1" fill="#e0dfe3"/>
<rect x="614" y="205" width="1" height="1" fill="#716f64"/>
<rect x="623" y="205" width="1" height="1" fill="#e0dfe3"/>
<rect x="614" y="206" width="1" height="1" fill="#716f64"/>
<rect x="623" y="206" width="1" height="1" fill="#e0dfe3"/>
<rect x="614" y="207" width="1" height="1" fill="#716f64"/>
<rect x="623" y="207" width="1" height="1" fill="#e0dfe3"/>
<rect x="615" y="208" width="1" height="1" fill="#716f64"/>
<rect x="622" y="208" width="1" height="1" fill="#e0dfe3"/>
<rect x="615" y="209" width="1" height="1" fill="#e0dfe3"/>
<rect x="616" y="209" width="1" height="1" fill="#e0dfe3"/>
<rect x="621" y="209" width="1" height="1" fill="#e0dfe3"/>
<rect x="622" y="209" width="1" height="1" fill="#e0dfe3"/>
<rect x="617" y="210" width="1" height="1" fill="#e0dfe3"/>
<rect x="618" y="210" width="1" height="1" fill="#e0dfe3"/>
<rect x="619" y="210" width="1" height="1" fill="#e0dfe3"/>
<rect x="620" y="210" width="1" height="1" fill="#e0dfe3"/>
<text class="tx" color="#000" x="629.00" y="211" font-size="11" fill="#000" text-anchor="start" font-family='"Liberation Sans", sans-serif' textLength="20.80" lengthAdjust="spacingAndGlyphs" >Line</text>
<rect x="672" y="202" width="1" height="1" fill="#ffffff"/>
<rect x="673" y="202" width="1" height="1" fill="#ffffff"/>
<rect x="674" y="202" width="1" height="1" fill="#ffffff"/>
<rect x="675" y="202" width="1" height="1" fill="#ffffff"/>
<rect x="672" y="203" width="1" height="1" fill="#ffffff"/>
<rect x="673" y="203" width="1" height="1" fill="#ffffff"/>
<rect x="674" y="203" width="1" height="1" fill="#ffffff"/>
<rect x="675" y="203" width="1" height="1" fill="#ffffff"/>
<rect x="676" y="203" width="1" height="1" fill="#ffffff"/>
<rect x="672" y="204" width="1" height="1" fill="#ffffff"/>
<rect x="673" y="204" width="1" height="1" fill="#ffffff"/>
<rect x="674" y="204" width="1" height="1" fill="#ffffff"/>
<rect x="675" y="204" width="1" height="1" fill="#ffffff"/>
<rect x="676" y="204" width="1" height="1" fill="#ffffff"/>
<rect x="677" y="204" width="1" height="1" fill="#ffffff"/>
<rect x="672" y="205" width="1" height="1" fill="#ffffff"/>
<rect x="673" y="205" width="1" height="1" fill="#ffffff"/>
<rect x="674" y="205" width="1" height="1" fill="#ffffff"/>
<rect x="675" y="205" width="1" height="1" fill="#ffffff"/>
<rect x="676" y="205" width="1" height="1" fill="#ffffff"/>
<rect x="677" y="205" width="1" height="1" fill="#ffffff"/>
<rect x="672" y="206" width="1" height="1" fill="#ffffff"/>
<rect x="673" y="206" width="1" height="1" fill="#ffffff"/>
<rect x="674" y="206" width="1" height="1" fill="#ffffff"/>
<rect x="675" y="206" width="1" height="1" fill="#ffffff"/>
<rect x="676" y="206" width="1" height="1" fill="#ffffff"/>
<rect x="677" y="206" width="1" height="1" fill="#ffffff"/>
<rect x="672" y="207" width="1" height="1" fill="#ffffff"/>
<rect x="673" y="207" width="1" height="1" fill="#ffffff"/>
<rect x="674" y="207" width="1" height="1" fill="#ffffff"/>
<rect x="675" y="207" width="1" height="1" fill="#ffffff"/>
<rect x="676" y="207" width="1" height="1" fill="#ffffff"/>
<rect x="677" y="207" width="1" height="1" fill="#ffffff"/>
<rect x="672" y="208" width="1" height="1" fill="#ffffff"/>
<rect x="673" y="208" width="1" height="1" fill="#ffffff"/>
<rect x="674" y="208" width="1" height="1" fill="#ffffff"/>
<rect x="675" y="208" width="1" height="1" fill="#ffffff"/>
<rect x="676" y="208" width="1" height="1" fill="#ffffff"/>
<rect x="672" y="209" width="1" height="1" fill="#ffffff"/>
<rect x="673" y="209" width="1" height="1" fill="#ffffff"/>
<rect x="674" y="209" width="1" height="1" fill="#ffffff"/>
<rect x="675" y="209" width="1" height="1" fill="#ffffff"/>
<rect x="672" y="200" width="1" height="1" fill="#9d9da1"/>
<rect x="673" y="200" width="1" height="1" fill="#9d9da1"/>
<rect x="674" y="200" width="1" height="1" fill="#9d9da1"/>
<rect x="675" y="200" width="1" height="1" fill="#9d9da1"/>
<rect x="676" y="201" width="1" height="1" fill="#9d9da1"/>
<rect x="677" y="201" width="1" height="1" fill="#9d9da1"/>
<rect x="678" y="202" width="1" height="1" fill="#ffffff"/>
<rect x="678" y="203" width="1" height="1" fill="#ffffff"/>
<rect x="679" y="204" width="1" height="1" fill="#ffffff"/>
<rect x="679" y="205" width="1" height="1" fill="#ffffff"/>
<rect x="679" y="206" width="1" height="1" fill="#ffffff"/>
<rect x="679" y="207" width="1" height="1" fill="#ffffff"/>
<rect x="678" y="208" width="1" height="1" fill="#ffffff"/>
<rect x="678" y="209" width="1" height="1" fill="#ffffff"/>
<rect x="676" y="210" width="1" height="1" fill="#ffffff"/>
<rect x="677" y="210" width="1" height="1" fill="#ffffff"/>
<rect x="672" y="211" width="1" height="1" fill="#ffffff"/>
<rect x="673" y="211" width="1" height="1" fill="#ffffff"/>
<rect x="674" y="211" width="1" height="1" fill="#ffffff"/>
<rect x="675" y="211" width="1" height="1" fill="#ffffff"/>
<rect x="672" y="201" width="1" height="1" fill="#716f64"/>
<rect x="673" y="201" width="1" height="1" fill="#716f64"/>
<rect x="674" y="201" width="1" height="1" fill="#716f64"/>
<rect x="675" y="201" width="1" height="1" fill="#716f64"/>
<rect x="676" y="202" width="1" height="1" fill="#716f64"/>
<rect x="677" y="202" width="1" height="1" fill="#716f64"/>
<rect x="677" y="203" width="1" height="1" fill="#e0dfe3"/>
<rect x="678" y="204" width="1" height="1" fill="#e0dfe3"/>
<rect x="678" y="205" width="1" height="1" fill="#e0dfe3"/>
<rect x="678" y="206" width="1" height="1" fill="#e0dfe3"/>
<rect x="678" y="207" width="1" height="1" fill="#e0dfe3"/>
<rect x="677" y="208" width="1" height="1" fill="#e0dfe3"/>
<rect x="676" y="209" width="1" height="1" fill="#e0dfe3"/>
<rect x="677" y="209" width="1" height="1" fill="#e0dfe3"/>
<rect x="672" y="210" width="1" height="1" fill="#e0dfe3"/>
<rect x="673" y="210" width="1" height="1" fill="#e0dfe3"/>
<rect x="674" y="210" width="1" height="1" fill="#e0dfe3"/>
<rect x="675" y="210" width="1" height="1" fill="#e0dfe3"/>
<rect x="673" y="204" width="1" height="1" fill="#000"/>
<rect x="674" y="204" width="1" height="1" fill="#000"/>
<rect x="672" y="205" width="1" height="1" fill="#000"/>
<rect x="673" y="205" width="1" height="1" fill="#000"/>
<rect x="674" y="205" width="1" height="1" fill="#000"/>
<rect x="675" y="205" width="1" height="1" fill="#000"/>
<rect x="672" y="206" width="1" height="1" fill="#000"/>
<rect x="673" y="206" width="1" height="1" fill="#000"/>
<rect x="674" y="206" width="1" height="1" fill="#000"/>
<rect x="675" y="206" width="1" height="1" fill="#000"/>
<rect x="673" y="207" width="1" height="1" fill="#000"/>
<rect x="674" y="207" width="1" height="1" fill="#000"/>
<text class="tx" color="#000" x="685.00" y="211" font-size="11" fill="#000" text-anchor="start" font-family='"Liberation Sans", sans-serif' textLength="37.08" lengthAdjust="spacingAndGlyphs" >Vertical</text>
<text class="tx" color="#000" x="522.99" y="240" font-size="11" fill="#000" text-anchor="start" font-family='"Liberation Sans", sans-serif' textLength="76.22" lengthAdjust="spacingAndGlyphs" >PO Scale (Left)</text>
<rect x="625" y="224" width="80" height="22" fill="#ffffff"/>
<rect x="625" y="224" width="80" height="1" fill="#9d9da1"/>
<rect x="625" y="224" width="1" height="22" fill="#9d9da1"/>
<rect x="625" y="245" width="80" height="1" fill="#ffffff"/>
<rect x="704" y="224" width="1" height="22" fill="#ffffff"/>
<rect x="626" y="225" width="78" height="1" fill="#716f64"/>
<rect x="626" y="225" width="1" height="20" fill="#716f64"/>
<rect x="626" y="244" width="78" height="1" fill="#f1f1f4"/>
<rect x="703" y="225" width="1" height="20" fill="#f1f1f4"/>
<rect x="686" y="226" width="17" height="18" fill="#e0dfe3"/>
<rect x="686" y="226" width="17" height="1" fill="#ffffff"/>
<rect x="686" y="226" width="1" height="18" fill="#ffffff"/>
<rect x="687" y="227" width="15" height="1" fill="#ffffff"/>
<rect x="687" y="227" width="1" height="16" fill="#ffffff"/>
<rect x="686" y="243" width="17" height="1" fill="#716f64"/>
<rect x="702" y="226" width="1" height="18" fill="#716f64"/>
<rect x="687" y="242" width="15" height="1" fill="#9d9da1"/>
<rect x="701" y="227" width="1" height="16" fill="#9d9da1"/>
<rect x="691" y="233" width="7" height="1" fill="#000"/>
<rect x="692" y="234" width="5" height="1" fill="#000"/>
<rect x="693" y="235" width="3" height="1" fill="#000"/>
<rect x="694" y="236" width="1" height="1" fill="#000"/>
<text class="tx" color="#000" x="629.00" y="239" font-size="11" fill="#000" text-anchor="start" font-family='"Liberation Sans", sans-serif' textLength="48.77" lengthAdjust="spacingAndGlyphs" >Auto Peak</text>
<text class="tx" color="#ffffff" x="526.00" y="265" font-size="11" fill="#ffffff" text-anchor="start" font-family='"Liberation Sans", sans-serif' textLength="88.47" lengthAdjust="spacingAndGlyphs" >Jitter Scale (Right)</text>
<text class="tx" color="#9d9da1" x="525.00" y="264" font-size="11" fill="#9d9da1" text-anchor="start" font-family='"Liberation Sans", sans-serif' textLength="88.47" lengthAdjust="spacingAndGlyphs" >Jitter Scale (Right)</text>
<rect x="625" y="248" width="80" height="22" fill="#e0dfe3"/>
<rect x="625" y="248" width="80" height="1" fill="#9d9da1"/>
<rect x="625" y="248" width="1" height="22" fill="#9d9da1"/>
<rect x="625" y="269" width="80" height="1" fill="#ffffff"/>
<rect x="704" y="248" width="1" height="22" fill="#ffffff"/>
<rect x="626" y="249" width="78" height="1" fill="#716f64"/>
<rect x="626" y="249" width="1" height="20" fill="#716f64"/>
<rect x="626" y="268" width="78" height="1" fill="#f1f1f4"/>
<rect x="703" y="249" width="1" height="20" fill="#f1f1f4"/>
<rect x="686" y="250" width="17" height="18" fill="#e0dfe3"/>
<rect x="686" y="250" width="17" height="1" fill="#ffffff"/>
<rect x="686" y="250" width="1" height="18" fill="#ffffff"/>
<rect x="687" y="251" width="15" height="1" fill="#ffffff"/>
<rect x="687" y="251" width="1" height="16" fill="#ffffff"/>
<rect x="686" y="267" width="17" height="1" fill="#716f64"/>
<rect x="702" y="250" width="1" height="18" fill="#716f64"/>
<rect x="687" y="266" width="15" height="1" fill="#9d9da1"/>
<rect x="701" y="251" width="1" height="16" fill="#9d9da1"/>
<rect x="692" y="258" width="7" height="1" fill="#ffffff"/>
<rect x="693" y="259" width="5" height="1" fill="#ffffff"/>
<rect x="694" y="260" width="3" height="1" fill="#ffffff"/>
<rect x="695" y="261" width="1" height="1" fill="#ffffff"/>
<rect x="691" y="257" width="7" height="1" fill="#9d9da1"/>
<rect x="692" y="258" width="5" height="1" fill="#9d9da1"/>
<rect x="693" y="259" width="3" height="1" fill="#9d9da1"/>
<rect x="694" y="260" width="1" height="1" fill="#9d9da1"/>
<text class="tx" color="#ffffff" x="630.00" y="263" font-size="11" fill="#ffffff" text-anchor="start" font-family='"Liberation Sans", sans-serif' textLength="48.77" lengthAdjust="spacingAndGlyphs" >Auto Peak</text>
<text class="tx" color="#9d9da1" x="629.00" y="262" font-size="11" fill="#9d9da1" text-anchor="start" font-family='"Liberation Sans", sans-serif' textLength="48.77" lengthAdjust="spacingAndGlyphs" >Auto Peak</text>
<text class="tx" color="#000" x="528.00" y="293" font-size="11" fill="#000" text-anchor="start" font-family='"Liberation Sans", sans-serif' textLength="36.69" lengthAdjust="spacingAndGlyphs" >Current</text>
<text class="tx" color="#000" x="534.00" y="307" font-size="11" fill="#000" text-anchor="start" font-family='"Liberation Sans", sans-serif' textLength="35.70" lengthAdjust="spacingAndGlyphs" >231020</text>
<text class="tx" color="#000" x="592.98" y="293" font-size="11" fill="#000" text-anchor="start" font-family='"Liberation Sans", sans-serif' textLength="45.66" lengthAdjust="spacingAndGlyphs" >Max LBA</text>
<text class="tx" color="#000" x="599.00" y="307" font-size="11" fill="#000" text-anchor="start" font-family='"Liberation Sans", sans-serif' textLength="36.72" lengthAdjust="spacingAndGlyphs" >231020</text>
<text class="tx" color="#ffffff" x="661.00" y="294" font-size="11" fill="#ffffff" text-anchor="start" font-family='"Liberation Sans", sans-serif' textLength="46.05" lengthAdjust="spacingAndGlyphs" >Jitter Avq</text>
<text class="tx" color="#9d9da1" x="660.00" y="293" font-size="11" fill="#9d9da1" text-anchor="start" font-family='"Liberation Sans", sans-serif' textLength="46.05" lengthAdjust="spacingAndGlyphs" >Jitter Avq</text>
<text class="tx" color="#ffffff" x="680.00" y="308" font-size="11" fill="#ffffff" text-anchor="start" font-family='"Liberation Sans", sans-serif' textLength="6.12" lengthAdjust="spacingAndGlyphs" >0</text>
<text class="tx" color="#9d9da1" x="679.00" y="307" font-size="11" fill="#9d9da1" text-anchor="start" font-family='"Liberation Sans", sans-serif' textLength="6.12" lengthAdjust="spacingAndGlyphs" >0</text>
<rect x="513" y="335" width="215" height="16" fill="#b4b6c2"/>
<rect x="513" y="335" width="215" height="1" fill="#9d9da1"/>
<rect x="513" y="335" width="1" height="16" fill="#9d9da1"/>
<rect x="513" y="350" width="215" height="1" fill="#ffffff"/>
<rect x="727" y="335" width="1" height="16" fill="#ffffff"/>
<text class="tx" color="#ffffff" x="581.03" y="347" font-size="11" fill="#ffffff" text-anchor="start" font-family='"Liberation Sans", sans-serif' textLength="76.25" lengthAdjust="spacingAndGlyphs" >100% Complete</text>
<rect x="550" y="361" width="48" height="23" fill="#e0dfe3"/>
<rect x="550" y="361" width="48" height="1" fill="#ffffff"/>
<rect x="550" y="361" width="1" height="23" fill="#ffffff"/>
<rect x="550" y="383" width="48" height="1" fill="#716f64"/>
<rect x="597" y="361" width="1" height="23" fill="#716f64"/>
<rect x="551" y="382" width="46" height="1" fill="#9d9da1"/>
<rect x="596" y="362" width="1" height="21" fill="#9d9da1"/>
<text class="tx" color="#000" x="560.95" y="376" font-size="11" fill="#000" text-anchor="start" font-family='"Liberation Sans", sans-serif' textLength="24.29" lengthAdjust="spacingAndGlyphs" >Start</text>
<rect x="562" y="378" width="7" height="1" fill="#000"/>
<rect x="668" y="361" width="49" height="23" fill="#e0dfe3"/>
<rect x="668" y="361" width="49" height="1" fill="#ffffff"/>
<rect x="668" y="361" width="1" height="23" fill="#ffffff"/>
<rect x="668" y="383" width="49" height="1" fill="#716f64"/>
<rect x="716" y="361" width="1" height="23" fill="#716f64"/>
<rect x="669" y="382" width="47" height="1" fill="#9d9da1"/>
<rect x="715" y="362" width="1" height="21" fill="#9d9da1"/>
<text class="tx" color="#000" x="679.95" y="376" font-size="11" fill="#000" text-anchor="start" font-family='"Liberation Sans", sans-serif' textLength="23.72" lengthAdjust="spacingAndGlyphs" >Stop</text>
<rect x="688" y="378" width="3" height="1" fill="#000"/>
<rect x="5" y="394" width="335" height="21" fill="#ffffff"/>
<rect x="5" y="394" width="335" height="1" fill="#9d9da1"/>
<rect x="5" y="394" width="1" height="21" fill="#9d9da1"/>
<rect x="5" y="414" width="335" height="1" fill="#ffffff"/>
<rect x="339" y="394" width="1" height="21" fill="#ffffff"/>
<rect x="6" y="395" width="333" height="1" fill="#716f64"/>
<rect x="6" y="395" width="1" height="19" fill="#716f64"/>
<rect x="6" y="413" width="333" height="1" fill="#f1f1f4"/>
<rect x="338" y="395" width="1" height="19" fill="#f1f1f4"/>
<rect x="321" y="396" width="17" height="17" fill="#e0dfe3"/>
<rect x="321" y="396" width="17" height="1" fill="#ffffff"/>
<rect x="321" y="396" width="1" height="17" fill="#ffffff"/>
<rect x="322" y="397" width="15" height="1" fill="#ffffff"/>
<rect x="322" y="397" width="1" height="15" fill="#ffffff"/>
<rect x="321" y="412" width="17" height="1" fill="#716f64"/>
<rect x="337" y="396" width="1" height="17" fill="#716f64"/>
<rect x="322" y="411" width="15" height="1" fill="#9d9da1"/>
<rect x="336" y="397" width="1" height="15" fill="#9d9da1"/>
<rect x="326" y="403" width="7" height="1" fill="#000"/>
<rect x="327" y="404" width="5" height="1" fill="#000"/>
<rect x="328" y="405" width="3" height="1" fill="#000"/>
<rect x="329" y="406" width="1" height="1" fill="#000"/>
<text color="#000" x="8.92" y="409" font-size="13.33" fill="#000" text-anchor="start" font-family='"Liberation Mono", monospace' textLength="234.20" lengthAdjust="spacingAndGlyphs" >PIONEER DVD-RW  DVR-108  (M:)</text>
<text class="tx" color="#000" x="368.95" y="408" font-size="11" fill="#000" text-anchor="start" font-family='"Liberation Sans", sans-serif' textLength="40.61" lengthAdjust="spacingAndGlyphs" >Refresh</text>
<rect x="370" y="409" width="8" height="1" fill="#000"/>
<rect x="435" y="394" width="300" height="21" fill="#ffffff"/>
<rect x="435" y="394" width="300" height="1" fill="#9d9da1"/>
<rect x="435" y="394" width="1" height="21" fill="#9d9da1"/>
<rect x="435" y="414" width="300" height="1" fill="#ffffff"/>
<rect x="734" y="394" width="1" height="21" fill="#ffffff"/>
<rect x="436" y="395" width="298" height="1" fill="#716f64"/>
<rect x="436" y="395" width="1" height="19" fill="#716f64"/>
<rect x="436" y="413" width="298" height="1" fill="#f1f1f4"/>
<rect x="733" y="395" width="1" height="19" fill="#f1f1f4"/>
<rect x="716" y="396" width="17" height="17" fill="#e0dfe3"/>
<rect x="716" y="396" width="17" height="1" fill="#ffffff"/>
<rect x="716" y="396" width="1" height="17" fill="#ffffff"/>
<rect x="717" y="397" width="15" height="1" fill="#ffffff"/>
<rect x="717" y="397" width="1" height="15" fill="#ffffff"/>
<rect x="716" y="412" width="17" height="1" fill="#716f64"/>
<rect x="732" y="396" width="1" height="17" fill="#716f64"/>
<rect x="717" y="411" width="15" height="1" fill="#9d9da1"/>
<rect x="731" y="397" width="1" height="15" fill="#9d9da1"/>
<rect x="721" y="403" width="7" height="1" fill="#000"/>
<rect x="722" y="404" width="5" height="1" fill="#000"/>
<rect x="723" y="405" width="3" height="1" fill="#000"/>
<rect x="724" y="406" width="1" height="1" fill="#000"/>
<text color="#000" x="520.00" y="409" font-size="13.33" fill="#000" text-anchor="start" font-family='"Liberation Mono", monospace' textLength="135.98" lengthAdjust="spacingAndGlyphs" >ADVANCED COMMANDS</text>
</svg>
</body></html>
